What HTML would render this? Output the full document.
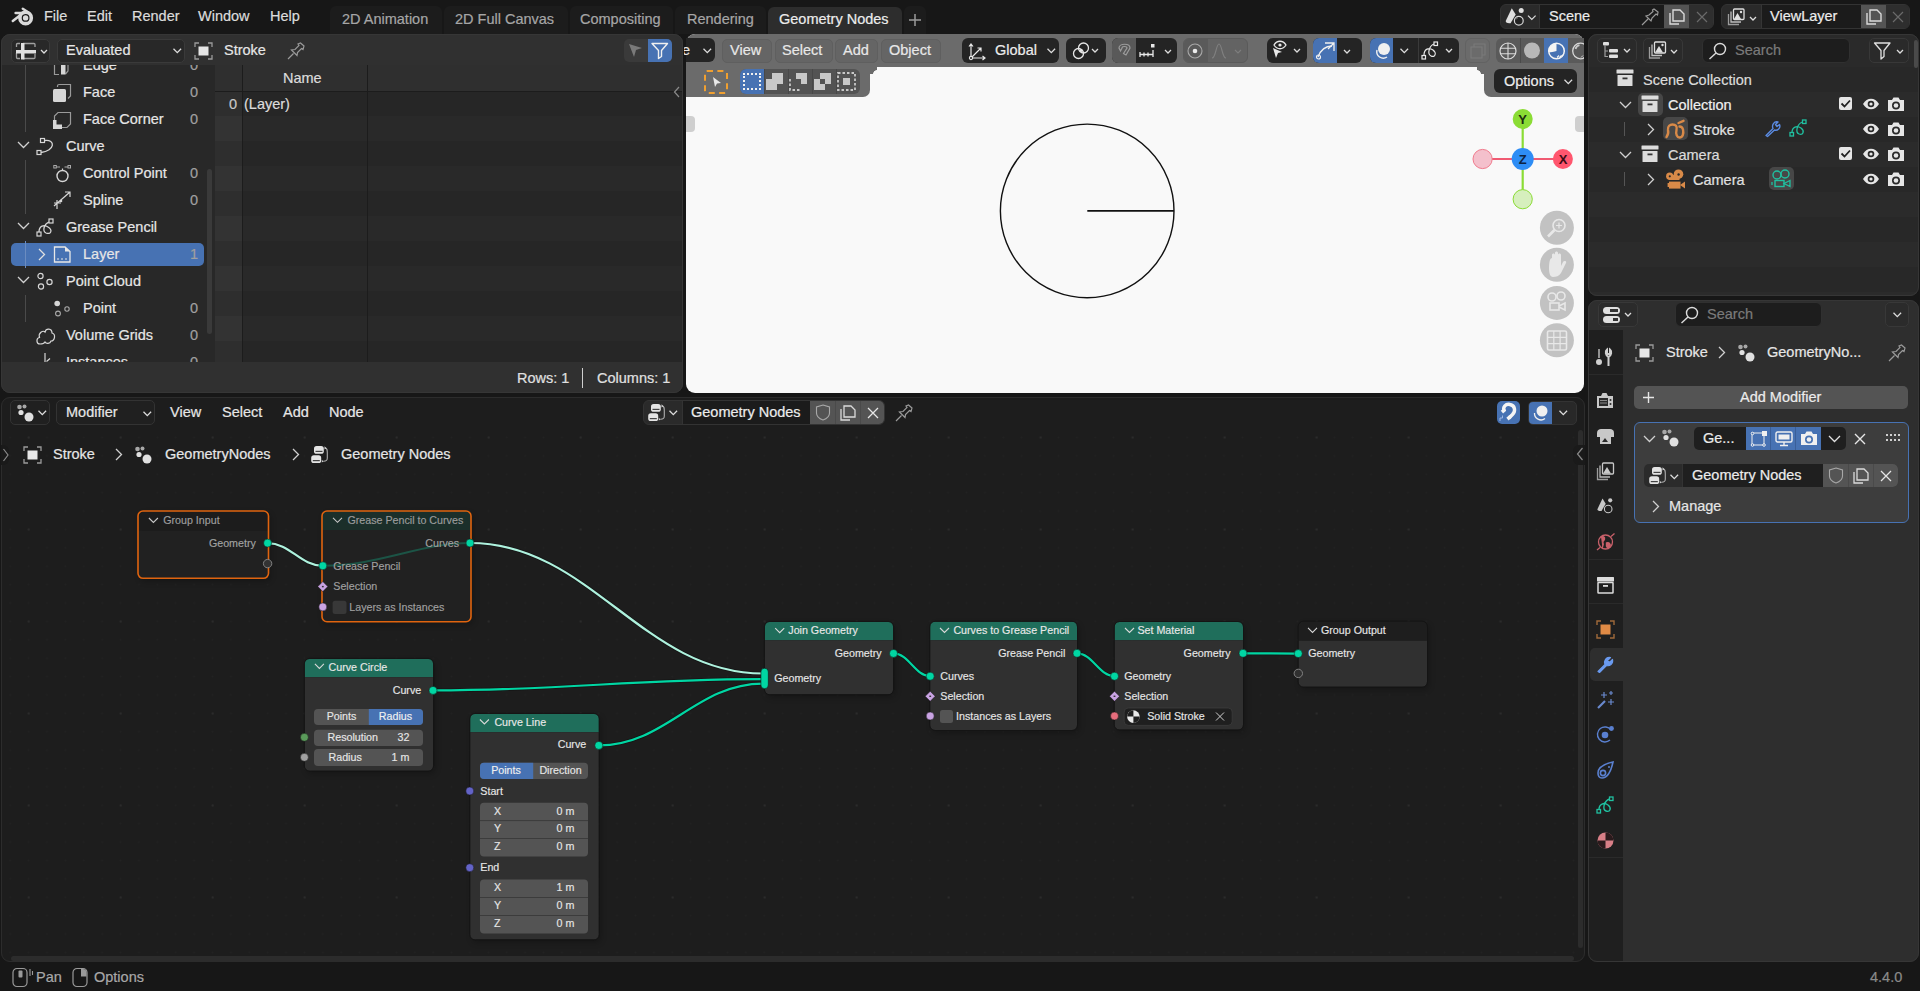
<!DOCTYPE html>
<html><head><meta charset="utf-8">
<style>
*{box-sizing:border-box;margin:0;padding:0}
html,body{width:1920px;height:991px;overflow:hidden;background:#171717;font-family:"Liberation Sans",sans-serif;color:#e5e5e5}
.a{position:absolute}
.t{position:absolute;white-space:nowrap;font-size:14.5px;line-height:18px;height:18px;-webkit-text-stroke:0.2px currentColor}
.s{position:absolute;white-space:nowrap;font-size:11px;line-height:14px;height:14px}
svg{position:absolute;overflow:visible}
.area{position:absolute;border:1px solid #3a3a3a;border-radius:9px;overflow:hidden}
.btn{position:absolute;border-radius:5px;background:#2b2b2b;border:1px solid #3d3d3d}
.dk{position:absolute;border-radius:5px;background:#1d1d1d}
</style></head><body>
<!-- TOP BAR -->
<div class="a" style="left:0;top:0;width:1920px;height:34px;background:#171717">
 <svg style="left:0;top:0" width="40" height="34"><g stroke="#dadada" stroke-linecap="round" fill="none"><path d="M15.6 12.9 H24 M12.8 21 L20.5 15 M22.8 8.8 L28.5 12.5" stroke-width="2.5"/><circle cx="25.6" cy="17.9" r="5.7" stroke-width="3.6"/></g><circle cx="25.6" cy="17.9" r="2.7" fill="#dadada"/></svg>
 <div class="t" style="left:44px;top:7px;color:#dcdcdc">File</div>
 <div class="t" style="left:87px;top:7px;color:#dcdcdc">Edit</div>
 <div class="t" style="left:132px;top:7px;color:#dcdcdc">Render</div>
 <div class="t" style="left:198px;top:7px;color:#dcdcdc">Window</div>
 <div class="t" style="left:270px;top:7px;color:#dcdcdc">Help</div>
 <div class="a" style="left:330px;top:6px;width:112px;height:28px;background:#1c1c1c;border-radius:6px 6px 0 0"></div>
 <div class="a" style="left:444px;top:6px;width:124px;height:28px;background:#1c1c1c;border-radius:6px 6px 0 0"></div>
 <div class="a" style="left:570px;top:6px;width:103px;height:28px;background:#1c1c1c;border-radius:6px 6px 0 0"></div>
 <div class="a" style="left:675px;top:6px;width:91px;height:28px;background:#1c1c1c;border-radius:6px 6px 0 0"></div>
 <div class="a" style="left:768px;top:7px;width:134px;height:27px;background:#2d2d2d;border-radius:6px 6px 0 0"></div>
 <div class="a" style="left:904px;top:6px;width:22px;height:28px;background:#1c1c1c;border-radius:6px 6px 0 0"></div>
 <div class="t" style="left:342px;top:10px;color:#a6a6a6">2D Animation</div>
 <div class="t" style="left:455px;top:10px;color:#a6a6a6">2D Full Canvas</div>
 <div class="t" style="left:580px;top:10px;color:#a6a6a6">Compositing</div>
 <div class="t" style="left:687px;top:10px;color:#a6a6a6">Rendering</div>
 <div class="t" style="left:779px;top:10px;color:#ececec">Geometry Nodes</div>
 <svg style="left:909px;top:14px" width="12" height="12"><path d="M6 0V12M0 6H12" stroke="#9a9a9a" stroke-width="1.5"/></svg>
 <!-- scene widget -->
 <div class="a" style="left:1500px;top:4px;width:214px;height:25px;border-radius:6px;background:#2a2a2a;border:1px solid #333;overflow:hidden">
  <div class="a" style="left:38px;top:0;width:125px;height:25px;background:#1b1b1b;border-left:1px solid #353535"></div>
  <div class="a" style="left:163px;top:0;width:25px;height:25px;background:#545454"></div>
  <div class="a" style="left:188px;top:0;width:26px;height:25px;background:#2e2e2e"></div>
 </div>
 <svg style="left:1500px;top:4px" width="45" height="26"><path d="M11.8 4.2 L5.8 16.8 C5.3 18.3 7 19.6 10.6 19.2 L15.7 10.6 Z" fill="#e0e0e0"/><circle cx="21.2" cy="6.6" r="2.5" fill="#e0e0e0"/><circle cx="18.8" cy="16.7" r="4.4" fill="#222" stroke="#d8d8d8" stroke-width="1.2"/><path d="M16.5 14.8 L17.5 14" stroke="#bbb" stroke-width="1"/><path d="M28 11.6 L31.8 15.4 L35.6 11.6" fill="none" stroke="#ddd" stroke-width="1.2"/></svg>
 <div class="t" style="left:1549px;top:7px;color:#ececec">Scene</div>
 <svg style="left:1641px;top:8px" width="18" height="18"><path d="M1 17 L7 11 M5 8 L10 13 L11 10 L15 6 L16.5 7 L17 4 L13 1 L11.5 2 L12 3.5 L8 7 Z" fill="none" stroke="#9a9a9a" stroke-width="1.2"/></svg>
 <svg style="left:1667px;top:8px" width="20" height="18"><path d="M3 5 V16 H12 M6 2 H13 L17 6 V13 H6 Z" fill="none" stroke="#dadada" stroke-width="1.4"/></svg>
 <svg style="left:1696px;top:11px" width="12" height="12"><path d="M1 1L11 11M11 1L1 11" stroke="#6a6a6a" stroke-width="1.2"/></svg>
 <div class="a" style="left:1721px;top:4px;width:189px;height:25px;border-radius:6px;background:#2a2a2a;border:1px solid #333;overflow:hidden">
  <div class="a" style="left:39px;top:0;width:100px;height:25px;background:#1b1b1b;border-left:1px solid #353535"></div>
  <div class="a" style="left:139px;top:0;width:25px;height:25px;background:#545454"></div>
  <div class="a" style="left:164px;top:0;width:25px;height:25px;background:#2e2e2e"></div>
 </div>
 <svg style="left:1727px;top:8px" width="32" height="18"><path d="M1.5 6 V16.5 H12" fill="none" stroke="#9c9c9c" stroke-width="1.3"/><path d="M4 3.5 V14 H14" fill="none" stroke="#c0c0c0" stroke-width="1.3"/><rect x="6.5" y="1" width="10.5" height="10.5" rx="1" fill="none" stroke="#dedede" stroke-width="1.3"/><path d="M7 11 L10.5 5 L14 11Z" fill="#dedede"/><circle cx="14" cy="4" r="1.2" fill="#dedede"/><path d="M23 9l3 3 3-3" fill="none" stroke="#ddd" stroke-width="1.3"/></svg>
 <div class="t" style="left:1770px;top:7px;color:#ececec">ViewLayer</div>
 <svg style="left:1864px;top:8px" width="20" height="18"><path d="M3 5 V16 H12 M6 2 H13 L17 6 V13 H6 Z" fill="none" stroke="#dadada" stroke-width="1.4"/></svg>
 <svg style="left:1892px;top:11px" width="12" height="12"><path d="M1 1L11 11M11 1L1 11" stroke="#6a6a6a" stroke-width="1.2"/></svg>
</div>

<!-- SPREADSHEET -->
<div class="a" style="left:1px;top:34px;width:682px;height:359px;background:#282828;border-radius:9px;overflow:hidden">
 <div class="a" style="left:0;top:0;width:682px;height:31px;background:#303030"></div>
 <div class="a" style="left:214px;top:31px;width:468px;height:297px;background:#282828"></div>
 <div class="a" style="left:214px;top:57px;width:468px;height:271px;background:repeating-linear-gradient(#262626 0 25px, #292929 25px 50px)"></div>
 <div class="a" style="left:214px;top:57px;width:27px;height:271px;background:repeating-linear-gradient(#2e2e2e 0 25px, #333333 25px 50px)"></div>
 <div class="a" style="left:214px;top:31px;width:468px;height:26px;background:#2f2f2f"></div>
 <div class="a" style="left:214px;top:57px;width:468px;height:1px;background:#1c1c1c"></div>
 <div class="a" style="left:241px;top:31px;width:1px;height:297px;background:#1c1c1c"></div>
 <div class="a" style="left:366px;top:31px;width:1px;height:297px;background:#1c1c1c"></div>
 <div class="a" style="left:0;top:328px;width:682px;height:31px;background:#303030"></div>
</div>
<div class="a" style="left:1px;top:34px;width:682px;height:359px;border:1px solid #363636;border-radius:9px"></div>
<!-- ss header -->
<div class="btn" style="left:11px;top:39px;width:39px;height:24px;background:#282828;border-color:#3a3a3a"></div>
<svg style="left:15px;top:42px" width="32" height="18"><path d="M1.5 5V2.5a1 1 0 0 1 1-1H5 M8 1.5H19a1 1 0 0 1 1 1V5 M1.5 11V15.5a1 1 0 0 0 1 1H5 M8 16.5H19a1 1 0 0 0 1-1V12" fill="none" stroke="#a0a0a0" stroke-width="1.3"/><rect x="1" y="8" width="20" height="3.5" fill="#e0e0e0"/><rect x="6" y="1" width="3.5" height="16.5" fill="#e0e0e0"/><path d="M26 8l3 3 3-3" fill="none" stroke="#ddd" stroke-width="1.3"/></svg>
<div class="btn" style="left:57px;top:39px;width:128px;height:24px;background:#282828;border-color:#3a3a3a"></div>
<div class="t" style="left:66px;top:41px;color:#e6e6e6">Evaluated</div>
<svg style="left:173px;top:48px" width="9" height="6"><path d="M0.5 0.8l3.8 3.8 3.8-3.8" fill="none" stroke="#ddd" stroke-width="1.3"/></svg>
<svg style="left:194px;top:42px" width="19" height="18"><path d="M1 5V1H5 M14 1H18V5 M18 13V17H14 M5 17H1V13" fill="none" stroke="#9a9a9a" stroke-width="1.3"/><rect x="4.5" y="4.5" width="10" height="9" fill="#e6e6e6"/></svg>
<div class="t" style="left:224px;top:41px;color:#e6e6e6">Stroke</div>
<svg style="left:287px;top:42px" width="18" height="18"><path d="M1 17 L6.5 11.5 M4.5 8 L10 13.5 L10.5 10.5 L14.5 6.5 L16 7.5 L17 4 L13.5 1 L11 2 L12 3.5 L8 7.5 Z" fill="none" stroke="#9a9a9a" stroke-width="1.2"/></svg>
<div class="a" style="left:624px;top:39px;width:48px;height:23px;border-radius:5px;background:#3a3a3a;overflow:hidden"><div class="a" style="left:24px;top:0;width:24px;height:23px;background:#4772b3"></div></div>
<svg style="left:628px;top:43px" width="15" height="15"><path d="M1 1 L14 5 L8 7 L6 14 Z" fill="#7a7a7a"/></svg>
<svg style="left:651px;top:42px" width="18" height="17"><path d="M1 1.5 H16.5 L10.5 8.5 V14.5 L7.5 16.5 V8.5 Z" fill="none" stroke="#f0f0f0" stroke-width="1.4" stroke-linejoin="round"/></svg>
<svg style="left:673px;top:86px" width="8" height="12"><path d="M6 1 L1.5 6 L6 11" fill="none" stroke="#8a8a8a" stroke-width="1.2"/></svg>
<div class="t" style="left:283px;top:69px;color:#dcdcdc">Name</div>
<div class="t" style="left:229px;top:95px;color:#c8c8c8">0</div>
<div class="t" style="left:244px;top:95px;color:#dcdcdc">(Layer)</div>
<div class="t" style="left:517px;top:369px;color:#e0e0e0">Rows: 1</div>
<div class="a" style="left:582px;top:368px;width:1px;height:20px;background:#cfcfcf"></div>
<div class="t" style="left:597px;top:369px;color:#e0e0e0">Columns: 1</div>
<!-- ss tree -->
<div class="a" style="left:1px;top:65px;width:212px;height:297px;overflow:hidden">
 <div class="a" style="left:24px;top:-20px;width:1px;height:87px;background:#4a4a4a"></div>
 <div class="a" style="left:24px;top:95px;width:1px;height:54px;background:#4a4a4a"></div>
 <div class="a" style="left:24px;top:176px;width:1px;height:27px;background:#4a4a4a"></div>
 <div class="a" style="left:24px;top:230px;width:1px;height:27px;background:#4a4a4a"></div>
 <div class="a" style="left:10px;top:178px;width:193px;height:23px;background:#4772b3;border-radius:5px"></div>
 <div class="a" style="left:24px;top:176px;width:1px;height:27px;background:#6b8cc0"></div>
 <div class="a" style="left:206px;top:104px;width:5px;height:165px;background:#3a3a3a;border-radius:3px"></div>
 <div class="t" style="left:82px;top:-9px;color:#e6e6e6">Edge</div>
 <div class="t" style="left:189px;top:-9px;color:#a0a0a0">0</div>
 <div class="t" style="left:82px;top:18px;color:#e6e6e6">Face</div>
 <div class="t" style="left:189px;top:18px;color:#a0a0a0">0</div>
 <div class="t" style="left:82px;top:45px;color:#e6e6e6">Face Corner</div>
 <div class="t" style="left:189px;top:45px;color:#a0a0a0">0</div>
 <div class="t" style="left:65px;top:72px;color:#e6e6e6">Curve</div>
 <div class="t" style="left:82px;top:99px;color:#e6e6e6">Control Point</div>
 <div class="t" style="left:189px;top:99px;color:#a0a0a0">0</div>
 <div class="t" style="left:82px;top:126px;color:#e6e6e6">Spline</div>
 <div class="t" style="left:189px;top:126px;color:#a0a0a0">0</div>
 <div class="t" style="left:65px;top:153px;color:#e6e6e6">Grease Pencil</div>
 <div class="t" style="left:82px;top:180px;color:#e6e6e6">Layer</div>
 <div class="t" style="left:189px;top:180px;color:#a0a0a0">1</div>
 <div class="t" style="left:65px;top:207px;color:#e6e6e6">Point Cloud</div>
 <div class="t" style="left:82px;top:234px;color:#e6e6e6">Point</div>
 <div class="t" style="left:189px;top:234px;color:#a0a0a0">0</div>
 <div class="t" style="left:65px;top:261px;color:#e6e6e6">Volume Grids</div>
 <div class="t" style="left:189px;top:261px;color:#a0a0a0">0</div>
 <div class="t" style="left:65px;top:288px;color:#e6e6e6">Instances</div>
 <div class="t" style="left:189px;top:288px;color:#a0a0a0">0</div>
 <svg style="left:16px;top:76px" width="14" height="8"><path d="M1 1 L6.5 6.5 L12 1" fill="none" stroke="#d0d0d0" stroke-width="1.3"/></svg>
 <svg style="left:16px;top:157px" width="14" height="8"><path d="M1 1 L6.5 6.5 L12 1" fill="none" stroke="#d0d0d0" stroke-width="1.3"/></svg>
 <svg style="left:16px;top:211px" width="14" height="8"><path d="M1 1 L6.5 6.5 L12 1" fill="none" stroke="#d0d0d0" stroke-width="1.3"/></svg>
 <svg style="left:37px;top:183px" width="8" height="14"><path d="M1 1 L6.5 6.5 L1 12" fill="none" stroke="#e0e0e0" stroke-width="1.3"/></svg>

 <svg style="left:0;top:0" width="80" height="70"><g fill="none" stroke="#9a9a9a" stroke-width="1.2">
<path d="M53.5 -2 V9.5 H58"/><path d="M67 -2 V6 L64.5 9"/>
<path d="M56.5 22 V21 Q56.5 19.5 58 19.5 H69.5 V31 L67 33.5"/>
<path d="M53.5 55 V51 L57 47.5 H69.5 V59 L66 62.5 H61"/></g>
<rect x="60" y="-3" width="4.5" height="12.5" fill="#d6d6d6"/>
<rect x="52" y="24" width="13" height="13" rx="1.5" fill="#d6d6d6"/>
<path d="M52 55 H55.5 V59.5 H61 V64 H52 Z" fill="#d6d6d6"/></svg>
 
 
 <svg style="left:35px;top:72px" width="20" height="20"><rect x="4.5" y="1.5" width="4" height="4" fill="none" stroke="#d6d6d6" stroke-width="1.2"/><rect x="1" y="13.5" width="4" height="4" fill="none" stroke="#d6d6d6" stroke-width="1.2"/><path d="M8.5 3.5 C20 2 19 14 5 15.5" fill="none" stroke="#d6d6d6" stroke-width="1.3"/></svg>
 <svg style="left:52px;top:99px" width="20" height="20"><circle cx="9.5" cy="12" r="5.5" fill="none" stroke="#d6d6d6" stroke-width="1.4"/><rect x="0.8" y="1.5" width="2.5" height="2.5" fill="none" stroke="#aaa" stroke-width="1"/><rect x="15" y="1.5" width="2.5" height="2.5" fill="none" stroke="#aaa" stroke-width="1"/><path d="M3.5 3 H7 M11.5 3 H15" stroke="#aaa" stroke-width="1"/><path d="M9.5 4.5 L9.5 6.5" stroke="#d6d6d6" stroke-width="1.2"/></svg>
 <svg style="left:52px;top:126px" width="20" height="20"><path d="M1 15 L17 1 M12 1 H17 V6 M4 9 L4 18 M1 12 L8 12" fill="none" stroke="#d6d6d6" stroke-width="1.2"/><circle cx="8" cy="10" r="1.3" fill="#d6d6d6"/></svg>
 <svg style="left:35px;top:153px" width="20" height="20"><rect x="13" y="1" width="4" height="4" fill="none" stroke="#d6d6d6" stroke-width="1.2"/><rect x="1" y="14" width="4" height="4" fill="none" stroke="#d6d6d6" stroke-width="1.2"/><path d="M3 14 C3 8 8 6 12 9 C17 12 15 17 10 15 C6 13 8 6 13 4" fill="none" stroke="#d6d6d6" stroke-width="1.3"/></svg>
 <svg style="left:52px;top:180px" width="20" height="20"><path d="M1.5 2 H12 L17 6.5 V17 H1.5 Z" fill="none" stroke="#e8e8e8" stroke-width="1.3"/><path d="M12 2 V6.5 H17" fill="#e8e8e8"/><path d="M4 14 H6 M8 14 H10 M12 14 H14" stroke="#e8e8e8" stroke-width="1.2"/></svg>
 <svg style="left:35px;top:207px" width="20" height="20"><circle cx="4.5" cy="4" r="2.6" fill="none" stroke="#d6d6d6" stroke-width="1.2"/><circle cx="5" cy="14.5" r="2.6" fill="none" stroke="#d6d6d6" stroke-width="1.2"/><circle cx="13.5" cy="10" r="2.6" fill="none" stroke="#d6d6d6" stroke-width="1.2"/></svg>
 <svg style="left:52px;top:234px" width="20" height="20"><circle cx="4.2" cy="4.5" r="2.8" fill="#d6d6d6"/><circle cx="5" cy="14.5" r="2.4" fill="none" stroke="#aaa" stroke-width="1.1"/><circle cx="14" cy="10" r="2.2" fill="none" stroke="#aaa" stroke-width="1.1"/></svg>
 <svg style="left:35px;top:261px" width="20" height="20"><path d="M4 18 C0 18 0 12 3.5 11.5 C2 7 7 4 9 6 C10 2 16 2 16 7 C20 8 19 15 15 15 C14 18 10 18 9 16 C8 18 6 18 4 18 Z" fill="none" stroke="#d6d6d6" stroke-width="1.2"/></svg>
 <svg style="left:42px;top:287px" width="16" height="14"><path d="M2 1 V12 M3.5 9.5 L7 6.5" fill="none" stroke="#d6d6d6" stroke-width="1.2"/></svg>
</div>


<!-- VIEWPORT -->
<div class="a" style="left:686px;top:34px;width:898px;height:359px;background:#f9f9f9;border-radius:9px;overflow:hidden">
 <div class="a" style="left:0;top:0;width:898px;height:33px;background:#6b6b6b"></div>
 <div class="a" style="left:0;top:32px;width:184px;height:31px;background:#6b6b6b;border-radius:0 0 7px 0"></div>
 <div class="a" style="left:798px;top:32px;width:100px;height:31px;background:#6b6b6b;border-radius:0 0 0 7px"></div>
 <div class="a" style="left:184px;top:33px;width:7px;height:7px;background:radial-gradient(circle at 100% 100%, #f9f9f9 3.5px, #6b6b6b 4.2px)"></div>
 <div class="a" style="left:791px;top:33px;width:7px;height:7px;background:radial-gradient(circle at 0% 100%, #f9f9f9 3.5px, #6b6b6b 4.2px)"></div>
 <div class="a" style="left:0;top:82px;width:9px;height:16px;background:#cfcfcf;border-radius:0 4px 4px 0"></div>
 <div class="a" style="left:889px;top:82px;width:9px;height:16px;background:#cfcfcf;border-radius:4px 0 0 4px"></div>
</div>

<!-- vp header -->
<div class="a" style="left:686px;top:38px;width:29px;height:24px;background:#242424;border-radius:0 6px 6px 0"></div>
<div class="t" style="left:684px;top:41px;color:#e6e6e6;width:8px;overflow:hidden;text-indent:-2px">e</div>
<svg style="left:703px;top:48px" width="9" height="6"><path d="M0.5 0.8l3.8 3.8 3.8-3.8" fill="none" stroke="#ddd" stroke-width="1.3"/></svg>
<div class="a" style="left:722px;top:39px;width:50px;height:24px;background:#656565;border-radius:5px;border:1px solid #5f5f5f"></div>
<div class="a" style="left:775px;top:39px;width:58px;height:24px;background:#656565;border-radius:5px;border:1px solid #5f5f5f"></div>
<div class="a" style="left:835px;top:39px;width:43px;height:24px;background:#656565;border-radius:5px;border:1px solid #5f5f5f"></div>
<div class="a" style="left:881px;top:39px;width:60px;height:24px;background:#656565;border-radius:5px;border:1px solid #5f5f5f"></div>
<div class="t" style="left:730px;top:41px;color:#e8e8e8">View</div>
<div class="t" style="left:782px;top:41px;color:#e8e8e8">Select</div>
<div class="t" style="left:843px;top:41px;color:#e8e8e8">Add</div>
<div class="t" style="left:889px;top:41px;color:#e8e8e8">Object</div>
<div class="a" style="left:962px;top:38px;width:97px;height:25px;background:#242424;border-radius:6px"></div>
<svg style="left:968px;top:42px" width="20" height="18"><path d="M3 16V2 M1 4.5 L3 2 L5 4.5 M3 16H17 M14.5 14 L17 16 L14.5 18 M3 16 L13 6 M9.5 6 H13 V9.5" fill="none" stroke="#e8e8e8" stroke-width="1.2"/><circle cx="3" cy="16" r="1.6" fill="#242424" stroke="#e8e8e8" stroke-width="1.1"/></svg>
<div class="t" style="left:995px;top:41px;color:#ececec">Global</div>
<svg style="left:1047px;top:48px" width="9" height="6"><path d="M0.5 0.8l3.8 3.8 3.8-3.8" fill="none" stroke="#ddd" stroke-width="1.3"/></svg>
<div class="a" style="left:1066px;top:38px;width:40px;height:25px;background:#242424;border-radius:6px"></div>
<svg style="left:1072px;top:41px" width="32" height="20"><circle cx="11.5" cy="7" r="5" fill="none" stroke="#e8e8e8" stroke-width="1.3"/><circle cx="6.5" cy="12.5" r="5" fill="none" stroke="#e8e8e8" stroke-width="1.3"/><circle cx="9" cy="9.5" r="1.5" fill="#e8e8e8"/><path d="M20 8l3 3 3-3" fill="none" stroke="#ddd" stroke-width="1.3"/></svg>
<div class="a" style="left:1112px;top:38px;width:65px;height:25px;background:#242424;border-radius:6px;overflow:hidden"><div class="a" style="left:0;top:0;width:24px;height:25px;background:#595959"></div></div>
<svg style="left:1116px;top:42px" width="18" height="18"><path d="M3 6 C3 1 14 1 14 6 L10 13 L7.5 11.5 L11 6 C11 4 6 4 6 6 L4.5 9 Z" fill="none" stroke="#9c9c9c" stroke-width="1.2"/></svg>
<svg style="left:1139px;top:42px" width="36" height="18"><rect x="12" y="2" width="3.5" height="3.5" fill="#e8e8e8"/><path d="M1 10 V15 M1 12.5 H14 M5 10.5 V14.5 M9 10.5 V14.5 M14 8 V15" fill="none" stroke="#e8e8e8" stroke-width="1.3"/><path d="M26 8l3 3 3-3" fill="none" stroke="#ddd" stroke-width="1.3"/></svg>
<div class="a" style="left:1183px;top:38px;width:65px;height:25px;background:#636363;border-radius:6px;overflow:hidden;border:1px solid #5a5a5a"><div class="a" style="left:0;top:0;width:24px;height:25px;background:#5a5a5a"></div></div>
<svg style="left:1186px;top:42px" width="18" height="18"><circle cx="9" cy="9" r="7" fill="none" stroke="#a8a8a8" stroke-width="1.1"/><circle cx="9" cy="9" r="2.3" fill="#ececec"/></svg>
<svg style="left:1210px;top:42px" width="36" height="18"><path d="M2 16 C6 16 6 2 9 2 C12 2 12 16 16 16" fill="none" stroke="#808080" stroke-width="1.1"/><path d="M25 8l3 3 3-3" fill="none" stroke="#7d7d7d" stroke-width="1.2"/></svg>
<div class="a" style="left:1267px;top:38px;width:40px;height:25px;background:#242424;border-radius:6px"></div>
<svg style="left:1269px;top:40px" width="36" height="22"><path d="M4 8 L13 12 L9 13 L7 18 Z" fill="#e8e8e8"/><path d="M5 5 C8 0 14 0 17 5 C14 10 8 10 5 5 Z" fill="none" stroke="#e8e8e8" stroke-width="1.3"/><circle cx="11" cy="5" r="1.6" fill="#e8e8e8"/><path d="M25 9l3 3 3-3" fill="none" stroke="#ddd" stroke-width="1.3"/></svg>
<div class="a" style="left:1313px;top:38px;width:49px;height:25px;background:#242424;border-radius:6px;overflow:hidden"><div class="a" style="left:0;top:0;width:24px;height:25px;background:#4772b3"></div></div>
<svg style="left:1315px;top:41px" width="40" height="20"><path d="M3 16 C6 8 11 5 17 5" fill="none" stroke="#f0f0f0" stroke-width="1.3"/><path d="M10 2 H19 V10 M19 2 L13 8" fill="none" stroke="#f0f0f0" stroke-width="1.3"/><circle cx="3.5" cy="16" r="2" fill="none" stroke="#f0f0f0" stroke-width="1.2"/><path d="M29 9l3 3 3-3" fill="none" stroke="#ddd" stroke-width="1.3"/></svg>
<div class="a" style="left:1370px;top:38px;width:89px;height:25px;background:#242424;border-radius:6px;overflow:hidden"><div class="a" style="left:0;top:0;width:23px;height:25px;background:#4772b3"></div><div class="a" style="left:48px;top:0;width:1px;height:25px;background:#3a3a3a"></div></div>
<svg style="left:1372px;top:41px" width="22" height="20"><circle cx="12" cy="8" r="6" fill="#f0f0f0"/><path d="M5 9 A6.5 6.5 0 0 0 15 16" fill="none" stroke="#f0f0f0" stroke-width="1.4"/></svg>
<svg style="left:1400px;top:48px" width="9" height="6"><path d="M0.5 0.8l3.8 3.8 3.8-3.8" fill="none" stroke="#ddd" stroke-width="1.3"/></svg>
<svg style="left:1421px;top:41px" width="36" height="20"><rect x="13" y="1" width="3.5" height="3.5" fill="none" stroke="#e8e8e8" stroke-width="1.2"/><rect x="1" y="14.5" width="3.5" height="3.5" fill="none" stroke="#e8e8e8" stroke-width="1.2"/><path d="M3 14 C3 8 8 6 12 9 C16 12 14 17 10 15 C6 13 8 5 13 3" fill="none" stroke="#e8e8e8" stroke-width="1.2"/><path d="M25 8l3 3 3-3" fill="none" stroke="#ddd" stroke-width="1.3"/></svg>
<div class="a" style="left:1465px;top:38px;width:25px;height:25px;background:#6b6b6b;border-radius:6px;border:1px solid #626262"></div>
<svg style="left:1469px;top:42px" width="18" height="18"><rect x="2" y="5" width="11" height="11" fill="none" stroke="#7a7a7a" stroke-width="1.1"/><path d="M5 5V2H16V13H13" fill="none" stroke="#7a7a7a" stroke-width="1.1"/></svg>
<div class="a" style="left:1496px;top:38px;width:88px;height:25px;background:#5a5a5a;border-radius:6px 0 0 6px;overflow:hidden"><div class="a" style="left:48px;top:0;width:24px;height:25px;background:#4772b3"></div><div class="a" style="left:24px;top:0;width:1px;height:25px;background:#4a4a4a"></div></div>
<svg style="left:1499px;top:41px" width="20" height="20"><circle cx="9" cy="10" r="8" fill="none" stroke="#dcdcdc" stroke-width="1.2"/><path d="M9 2 V18 M1.6 7.3 H16.4 M1.6 12.7 H16.4" stroke="#dcdcdc" stroke-width="1.1"/></svg>
<svg style="left:1523px;top:41px" width="20" height="20"><circle cx="9" cy="9.5" r="8" fill="#b8b8b8"/></svg>
<svg style="left:1547px;top:41px" width="20" height="20"><circle cx="9.5" cy="10" r="7.8" fill="#4772b3" stroke="#f4f4f4" stroke-width="1.5"/><path d="M9.5 10 V2.2 A7.8 7.8 0 0 0 1.8 11 C4 11.5 7 11 9.5 10 Z" fill="#f4f4f4"/><path d="M10 16.5 L12 14.5 M12.5 16.5 L14.5 14.5 M14.8 15.2 L16.5 13.5" stroke="#f4f4f4" stroke-width="1.1"/></svg>
<svg style="left:1571px;top:41px;overflow:hidden" width="13" height="20"><circle cx="9.5" cy="10" r="7.8" fill="none" stroke="#d8d8d8" stroke-width="1.3"/><path d="M4.5 8 A5.5 5.5 0 0 1 8.5 4.2" fill="none" stroke="#c8c8c8" stroke-width="1.8"/><path d="M10 16.5 L12 14.5 M12.5 16.5 L14.5 14.5" stroke="#d8d8d8" stroke-width="1"/></svg>
<!-- tool header -->
<div class="a" style="left:704px;top:70px;width:24px;height:24px;border:2px dashed #f0a030;border-radius:3px"></div>
<svg style="left:712px;top:76px" width="10" height="12"><path d="M1 1 L9 7 L5 7.5 L3 11 Z" fill="#e8e8e8"/></svg>
<div class="a" style="left:740px;top:69px;width:120px;height:25px;background:#535353;border-radius:6px;overflow:hidden"><div class="a" style="left:0;top:0;width:24px;height:25px;background:#4772b3"></div>
 <div class="a" style="left:24px;top:0;width:1px;height:25px;background:#484848"></div><div class="a" style="left:48px;top:0;width:1px;height:25px;background:#484848"></div><div class="a" style="left:72px;top:0;width:1px;height:25px;background:#484848"></div><div class="a" style="left:96px;top:0;width:1px;height:25px;background:#484848"></div></div>
<div class="a" style="left:743px;top:73px;width:18px;height:17px;border:2px dotted #f0f0f0"></div>
<svg style="left:765px;top:72px" width="20" height="20"><path d="M7 1 H18 V12 H12 V18 H1 V7 H7 Z" fill="#c8c8c8"/></svg>
<svg style="left:789px;top:72px" width="20" height="20"><path d="M1 7 V18 H12" fill="none" stroke="#c8c8c8" stroke-width="1.8" stroke-dasharray="2.5 2"/><path d="M7 1 H18 V12 H12 V7 H7 Z" fill="#c8c8c8"/></svg>
<svg style="left:813px;top:72px" width="20" height="20"><path d="M7 1 H18 V12 H12 V18 H1 V7 H7 Z M7 7 V12 H12 V7 Z" fill="#c8c8c8" fill-rule="evenodd"/></svg>
<svg style="left:837px;top:72px" width="20" height="20"><rect x="1" y="1" width="17" height="17" fill="none" stroke="#c8c8c8" stroke-width="1.8" stroke-dasharray="2.5 2"/><rect x="6" y="6" width="7" height="7" fill="#c8c8c8"/></svg>
<div class="a" style="left:1494px;top:69px;width:83px;height:24px;background:#242424;border-radius:6px"></div>
<div class="t" style="left:1504px;top:72px;color:#ececec">Options</div>
<svg style="left:1564px;top:79px" width="9" height="6"><path d="M0.5 0.8l3.8 3.8 3.8-3.8" fill="none" stroke="#ddd" stroke-width="1.3"/></svg>
<!-- circle drawing -->
<svg style="left:0;top:0" width="1920" height="991"><circle cx="1087.2" cy="210.9" r="86.8" fill="none" stroke="#111" stroke-width="1.4"/><path d="M1087.3 210.9 H1174" stroke="#111" stroke-width="1.9"/></svg>
<!-- nav gizmo -->
<svg style="left:0;top:0" width="1920" height="991">
 <path d="M1522.7 119 V199" stroke="#8bdc35" stroke-width="2.2"/>
 <path d="M1482.6 159 H1563" stroke="#f05a72" stroke-width="2.2"/>
 <circle cx="1482.6" cy="159" r="9.6" fill="#f4c0cc" stroke="#f07a8c" stroke-width="1"/>
 <circle cx="1522.7" cy="199.2" r="9.6" fill="#d6efbd" stroke="#8bdc35" stroke-width="1"/>
 <circle cx="1522.7" cy="119" r="10" fill="#8bdc35"/>
 <circle cx="1562.9" cy="159" r="10" fill="#ff566e"/>
 <circle cx="1522.7" cy="159" r="11" fill="#2e8df5"/>
 <text x="1522.7" y="124" font-family="Liberation Sans" font-weight="bold" font-size="13" fill="#1c2a10" text-anchor="middle">Y</text>
 <text x="1563" y="164" font-family="Liberation Sans" font-weight="bold" font-size="13" fill="#3a0c14" text-anchor="middle">X</text>
 <text x="1522.7" y="164" font-family="Liberation Sans" font-weight="bold" font-size="13" fill="#0d2240" text-anchor="middle">Z</text>
 <circle cx="1556.9" cy="227.8" r="17" fill="#c2c2c2"/>
 <circle cx="1556.9" cy="264.8" r="17" fill="#c2c2c2"/>
 <circle cx="1556.9" cy="302.9" r="17" fill="#c2c2c2"/>
 <circle cx="1556.9" cy="340.2" r="17" fill="#c2c2c2"/>
 <g fill="none" stroke="#e8e8e8" stroke-width="1.6">
  <circle cx="1559" cy="225.5" r="6"/><path d="M1554.5 230 L1548 236.5" stroke-width="2.6"/><path d="M1559 222.5 V228.5 M1556 225.5 H1562" stroke-width="1.2"/>
  <rect x="1547.5" y="331" width="19" height="19" rx="1.5"/><path d="M1547.5 337.3 H1566.5 M1547.5 343.6 H1566.5 M1553.8 331 V350 M1560.1 331 V350" stroke-width="1.2"/>
  <circle cx="1552" cy="297" r="4"/><circle cx="1561" cy="296" r="4"/><rect x="1550" y="303" width="9" height="7"/><path d="M1559 306 L1565 303 V310 L1559 307" />
 </g>
 <path d="M1549 268 C1549 262 1550 258 1552 258 V265 V255 C1552 253 1555 253 1555 255 V264 V253 C1555 251 1558 251 1558 253 V264 V255 C1558 253 1561 253 1561 255 V266 L1563 262 C1564 260 1567 261 1566 263 L1561 273 C1559 276 1556 277 1553 277 C1550 277 1549 273 1549 268Z" fill="#e8e8e8"/>
</svg>


<!-- OUTLINER -->
<div class="a" style="left:1588px;top:34px;width:331px;height:262px;background:#282828;border-radius:9px;overflow:hidden">
 <div class="a" style="left:0;top:58px;width:331px;height:25px;background:#2b2b2b"></div><div class="a" style="left:0;top:108px;width:331px;height:25px;background:#2b2b2b"></div><div class="a" style="left:0;top:158px;width:331px;height:25px;background:#2b2b2b"></div><div class="a" style="left:0;top:208px;width:331px;height:25px;background:#2b2b2b"></div><div class="a" style="left:0;top:258px;width:331px;height:25px;background:#2b2b2b"></div>
 <div class="a" style="left:0;top:0;width:331px;height:33px;background:#2a2a2a"></div>
 <div class="a" style="left:326px;top:6px;width:4px;height:28px;background:#4a4a4a;border-radius:2px"></div>
</div>
<div class="a" style="left:1588px;top:34px;width:331px;height:262px;border:1px solid #363636;border-radius:9px"></div>
<div class="btn" style="left:1597px;top:38px;width:40px;height:25px;background:#2a2a2a;border-color:#383838"></div>
<svg style="left:1602px;top:41px" width="32" height="20"><rect x="1" y="1" width="6" height="3.5" rx="1" fill="#e0e0e0"/><path d="M3 4.5 V15.5 H6 M3 10 H6" fill="none" stroke="#a0a0a0" stroke-width="1.2"/><rect x="7" y="8" width="9" height="3.5" rx="1" fill="#e0e0e0"/><rect x="7" y="13.5" width="9" height="3.5" rx="1" fill="#e0e0e0"/><path d="M22 8l3 3 3-3" fill="none" stroke="#ddd" stroke-width="1.3"/></svg>
<div class="btn" style="left:1643px;top:38px;width:40px;height:25px;background:#2a2a2a;border-color:#383838"></div>
<svg style="left:1648px;top:41px" width="32" height="20"><path d="M1.5 6 V17 H12" fill="none" stroke="#9c9c9c" stroke-width="1.3"/><path d="M4 3.5 V14.5 H14" fill="none" stroke="#c0c0c0" stroke-width="1.3"/><rect x="6.5" y="1" width="11" height="11" rx="1" fill="none" stroke="#dedede" stroke-width="1.3"/><path d="M7 11.5 L11 5 L15 11.5Z" fill="#dedede"/><circle cx="14.5" cy="4" r="1.2" fill="#dedede"/><path d="M23 9l3 3 3-3" fill="none" stroke="#ddd" stroke-width="1.3"/></svg>
<div class="a" style="left:1702px;top:38px;width:148px;height:25px;background:#1d1d1d;border-radius:6px;border:1px solid #303030"></div>
<svg style="left:1708px;top:42px" width="20" height="18"><circle cx="12" cy="7" r="5.5" fill="none" stroke="#dcdcdc" stroke-width="1.4"/><path d="M8 11 L1.5 17" stroke="#dcdcdc" stroke-width="1.4"/></svg>
<div class="t" style="left:1735px;top:41px;color:#7a7a7a">Search</div>
<div class="btn" style="left:1869px;top:38px;width:40px;height:25px;background:#2a2a2a;border-color:#383838"></div>
<svg style="left:1873px;top:41px" width="34" height="20"><path d="M1.5 2 H17 L11 9.5 V15.5 L8 18 V9.5 Z" fill="none" stroke="#e0e0e0" stroke-width="1.3" stroke-linejoin="round"/><path d="M24 9l3 3 3-3" fill="none" stroke="#ddd" stroke-width="1.3"/></svg>
<svg style="left:1616px;top:69px" width="18" height="18"><rect x="0.5" y="0.5" width="17" height="4" rx="0.5" fill="#dcdcdc"/><rect x="1.5" y="6" width="15" height="11" rx="0.5" fill="#dcdcdc"/><rect x="6.5" y="8.5" width="5" height="1.8" fill="#333"/></svg>
<div class="t" style="left:1643px;top:71px;color:#dcdcdc">Scene Collection</div>
<svg style="left:1619px;top:101px" width="13" height="8"><path d="M1 1 L6.5 6.5 L12 1" fill="none" stroke="#d0d0d0" stroke-width="1.3"/></svg>
<div class="a" style="left:1638px;top:93px;width:25px;height:23px;background:#474747;border-radius:5px"></div>
<svg style="left:1641px;top:95px" width="18" height="18"><rect x="0.5" y="0.5" width="17" height="4" rx="0.5" fill="#dcdcdc"/><rect x="1.5" y="6" width="15" height="11" rx="0.5" fill="#dcdcdc"/><rect x="6.5" y="8.5" width="5" height="1.8" fill="#333"/></svg>
<div class="t" style="left:1668px;top:96px;color:#f0f0f0">Collection</div>
<div class="a" style="left:1839px;top:97px;width:13px;height:13px;background:#e6e6e6;border-radius:2px"></div><svg style="left:1840px;top:98px" width="11" height="11"><path d="M1.5 5.5 L4.5 8.5 L10 2.5" fill="none" stroke="#222" stroke-width="1.8"/></svg><svg style="left:1862px;top:97px" width="18" height="14"><path d="M1 7 C5 0 13 0 17 7 C13 14 5 14 1 7 Z" fill="#e6e6e6"/><circle cx="9" cy="7" r="3.3" fill="#282828"/><circle cx="9" cy="7" r="1.6" fill="#e6e6e6"/></svg><svg style="left:1887px;top:96px" width="18" height="16"><path d="M1 4 H5 L6.5 1.5 H11.5 L13 4 H17 V15 H1 Z" fill="#e6e6e6"/><circle cx="9" cy="9.5" r="4" fill="#2a2a2a"/><circle cx="9" cy="9.5" r="2.3" fill="#e6e6e6"/></svg>
<div class="a" style="left:1624px;top:122px;width:1px;height:14px;background:#555"></div>
<svg style="left:1647px;top:123px" width="8" height="13"><path d="M1 1 L6.5 6.5 L1 12" fill="none" stroke="#d0d0d0" stroke-width="1.3"/></svg>
<div class="a" style="left:1663px;top:117px;width:25px;height:23px;background:#474747;border-radius:5px"></div>
<svg style="left:1660px;top:114px" width="30" height="30"><path d="M6.5 23 C8 21 8.5 18 8 16 C7.5 12 10 10.5 12.5 10.5 C15.5 10.5 17.5 12 16.5 16 C15.5 20 17 23.5 19.5 23.5 C22.5 23.5 24 20 23 15.5 C22.5 13.5 21 12.5 19.5 12.5 M18.5 9 L23.5 6.8" fill="none" stroke="#d98a48" stroke-width="2.4" stroke-linecap="round"/></svg>
<div class="t" style="left:1693px;top:121px;color:#e0e0e0">Stroke</div>
<svg style="left:1764px;top:120px" width="19" height="17"><path d="M2 15.5 L9 8.5 C7.5 5 10 1 14 2 L11.5 4.5 L13 6.5 L15.5 4.5 C17 8 13.5 11 10.5 10 L3.5 16.5 Z" fill="none" stroke="#5a8ae0" stroke-width="1.4" stroke-linejoin="round"/></svg>
<svg style="left:1789px;top:119px" width="19" height="18"><rect x="13.5" y="1" width="3.5" height="3.5" fill="none" stroke="#20c0a0" stroke-width="1.3"/><rect x="1" y="13.5" width="3.5" height="3.5" fill="none" stroke="#20c0a0" stroke-width="1.3"/><path d="M3 13.5 C3 8 8 6 12 9 C16 12 14 16.5 10 15 C6 13.5 8 5 13.5 3" fill="none" stroke="#20c0a0" stroke-width="1.3"/></svg>
<svg style="left:1862px;top:122px" width="18" height="14"><path d="M1 7 C5 0 13 0 17 7 C13 14 5 14 1 7 Z" fill="#e6e6e6"/><circle cx="9" cy="7" r="3.3" fill="#282828"/><circle cx="9" cy="7" r="1.6" fill="#e6e6e6"/></svg><svg style="left:1887px;top:121px" width="18" height="16"><path d="M1 4 H5 L6.5 1.5 H11.5 L13 4 H17 V15 H1 Z" fill="#e6e6e6"/><circle cx="9" cy="9.5" r="4" fill="#2a2a2a"/><circle cx="9" cy="9.5" r="2.3" fill="#e6e6e6"/></svg>
<svg style="left:1619px;top:151px" width="13" height="8"><path d="M1 1 L6.5 6.5 L12 1" fill="none" stroke="#d0d0d0" stroke-width="1.3"/></svg>
<svg style="left:1641px;top:145px" width="18" height="18"><rect x="0.5" y="0.5" width="17" height="4" rx="0.5" fill="#dcdcdc"/><rect x="1.5" y="6" width="15" height="11" rx="0.5" fill="#dcdcdc"/><rect x="6.5" y="8.5" width="5" height="1.8" fill="#333"/></svg>
<div class="t" style="left:1668px;top:146px;color:#dcdcdc">Camera</div>
<div class="a" style="left:1839px;top:147px;width:13px;height:13px;background:#e6e6e6;border-radius:2px"></div><svg style="left:1840px;top:148px" width="11" height="11"><path d="M1.5 5.5 L4.5 8.5 L10 2.5" fill="none" stroke="#222" stroke-width="1.8"/></svg><svg style="left:1862px;top:147px" width="18" height="14"><path d="M1 7 C5 0 13 0 17 7 C13 14 5 14 1 7 Z" fill="#e6e6e6"/><circle cx="9" cy="7" r="3.3" fill="#282828"/><circle cx="9" cy="7" r="1.6" fill="#e6e6e6"/></svg><svg style="left:1887px;top:146px" width="18" height="16"><path d="M1 4 H5 L6.5 1.5 H11.5 L13 4 H17 V15 H1 Z" fill="#e6e6e6"/><circle cx="9" cy="9.5" r="4" fill="#2a2a2a"/><circle cx="9" cy="9.5" r="2.3" fill="#e6e6e6"/></svg>
<div class="a" style="left:1624px;top:172px;width:1px;height:14px;background:#555"></div>
<svg style="left:1647px;top:173px" width="8" height="13"><path d="M1 1 L6.5 6.5 L1 12" fill="none" stroke="#d0d0d0" stroke-width="1.3"/></svg>
<svg style="left:1660px;top:164px" width="30" height="30"><circle cx="9.7" cy="12.2" r="3.6" fill="#d98a48"/><circle cx="18.5" cy="10.2" r="4.8" fill="#d98a48"/><rect x="8.5" y="11" width="11" height="5" fill="#d98a48"/><rect x="9" y="17.6" width="11.5" height="7" fill="#d98a48"/><rect x="7.6" y="19" width="2" height="4" fill="#d98a48"/><path d="M20 21 L25 17.6 V24.6 Z" fill="#d98a48"/><circle cx="9.8" cy="12.3" r="1.1" fill="#2a2a2a"/><circle cx="18.6" cy="10.5" r="1.2" fill="#2a2a2a"/></svg>
<div class="t" style="left:1693px;top:171px;color:#e0e0e0">Camera</div>
<div class="a" style="left:1769px;top:167px;width:25px;height:23px;background:#474747;border-radius:5px"></div>
<svg style="left:1771px;top:169px" width="21" height="20"><circle cx="6" cy="6" r="4" fill="none" stroke="#20c0a0" stroke-width="1.4"/><circle cx="14" cy="5" r="4" fill="none" stroke="#20c0a0" stroke-width="1.4"/><rect x="4" y="11.5" width="9" height="6" fill="none" stroke="#20c0a0" stroke-width="1.4"/><path d="M13 14.5 L19 11.5 V17.5 Z M1 13 V16" fill="none" stroke="#20c0a0" stroke-width="1.3"/></svg>
<svg style="left:1862px;top:172px" width="18" height="14"><path d="M1 7 C5 0 13 0 17 7 C13 14 5 14 1 7 Z" fill="#e6e6e6"/><circle cx="9" cy="7" r="3.3" fill="#282828"/><circle cx="9" cy="7" r="1.6" fill="#e6e6e6"/></svg><svg style="left:1887px;top:171px" width="18" height="16"><path d="M1 4 H5 L6.5 1.5 H11.5 L13 4 H17 V15 H1 Z" fill="#e6e6e6"/><circle cx="9" cy="9.5" r="4" fill="#2a2a2a"/><circle cx="9" cy="9.5" r="2.3" fill="#e6e6e6"/></svg>

<!-- PROPERTIES -->
<div class="a" style="left:1588px;top:300px;width:331px;height:662px;background:#2e2e2e;border-radius:9px;overflow:hidden">
 <div class="a" style="left:0;top:30px;width:35px;height:632px;background:#1f1f1f"></div>
 <div class="a" style="left:0;top:30px;width:35px;height:45px;background:#1f1f1f;border-bottom:1px solid #2a2a2a"></div>
 <div class="a" style="left:0;top:303px;width:35px;height:1px;background:#2a2a2a"></div>
 <div class="a" style="left:0;top:259px;width:35px;height:1px;background:#2a2a2a"></div>
 <div class="a" style="left:2px;top:348px;width:33px;height:33px;background:#2e2e2e;border-radius:5px 0 0 5px"></div>
 <div class="a" style="left:0;top:557px;width:35px;height:1px;background:#2a2a2a"></div>
</div>
<div class="a" style="left:1588px;top:300px;width:331px;height:662px;border:1px solid #363636;border-radius:9px"></div>
<div class="btn" style="left:1598px;top:302px;width:40px;height:25px;background:#2b2b2b;border-color:#383838"></div>
<svg style="left:1602px;top:306px" width="32" height="18"><rect x="1" y="1" width="17" height="7" rx="3.5" fill="#e0e0e0"/><rect x="1" y="10" width="17" height="7" rx="3.5" fill="#e0e0e0"/><rect x="8" y="3" width="8" height="3" fill="#333"/><rect x="11" y="12" width="5" height="3" fill="#333"/><path d="M23 7l3 3 3-3" fill="none" stroke="#ddd" stroke-width="1.3"/></svg>
<div class="a" style="left:1675px;top:302px;width:147px;height:25px;background:#1d1d1d;border-radius:6px;border:1px solid #303030"></div>
<svg style="left:1680px;top:306px" width="20" height="18"><circle cx="12" cy="7" r="5.5" fill="none" stroke="#dcdcdc" stroke-width="1.4"/><path d="M8 11 L1.5 17" stroke="#dcdcdc" stroke-width="1.4"/></svg>
<div class="t" style="left:1707px;top:305px;color:#7a7a7a">Search</div>
<div class="btn" style="left:1885px;top:302px;width:24px;height:25px;background:#2b2b2b;border-color:#383838"></div>
<svg style="left:1893px;top:312px" width="9" height="6"><path d="M0.5 0.8l3.8 3.8 3.8-3.8" fill="none" stroke="#ddd" stroke-width="1.3"/></svg>
<!-- tabs -->
<svg style="left:1596px;top:348px" width="20" height="20"><path d="M3 1 V10" stroke="#d0d0d0" stroke-width="1.3"/><circle cx="3" cy="14" r="3" fill="#d0d0d0"/><path d="M12.5 18 V9 C9.5 8 9 3 11 1.5 V6 H14 V1.5 C16 3 15.5 8 12.5 9" fill="none" stroke="#d0d0d0" stroke-width="2"/></svg>
<svg style="left:1596px;top:392px" width="19" height="17"><path d="M1 4 H5 L6.5 1 H10.5 L12 4 H17 V16 H1 Z" fill="#c8c8c8"/><rect x="3" y="6" width="9" height="8" fill="#2a2a2a"/><path d="M4 8.5 H11 M4 11 H11" stroke="#888" stroke-width="1"/><circle cx="14.5" cy="8" r="1" fill="#2a2a2a"/><circle cx="14.5" cy="12" r="1" fill="#2a2a2a"/></svg>
<svg style="left:1596px;top:427px" width="19" height="18"><path d="M1 6 C1 3 3 2 5 2 H14 C16 2 18 3 18 6 V10 H1 Z" fill="#c8c8c8"/><rect x="4" y="9" width="11" height="8" fill="#c8c8c8"/><path d="M6 15 L9 11 L12 15 Z" fill="#2a2a2a"/></svg>
<svg style="left:1596px;top:462px" width="19" height="19"><path d="M1.5 6 V17.5 H12" fill="none" stroke="#9c9c9c" stroke-width="1.3"/><path d="M4 3.5 V15 H14" fill="none" stroke="#b8b8b8" stroke-width="1.3"/><rect x="6.5" y="1" width="11" height="11" rx="1" fill="none" stroke="#c8c8c8" stroke-width="1.3"/><path d="M7 11.5 L11 5 L15 11.5Z" fill="#c8c8c8"/></svg>
<svg style="left:1594px;top:496px" width="22" height="22"><path d="M8.5 2.5 L3.5 13 C3 14.3 4.4 15.3 7.5 15 L11.7 7.8 Z" fill="#c8c8c8"/><circle cx="16.2" cy="4.3" r="2.1" fill="#c8c8c8"/><circle cx="14.2" cy="13" r="3.8" fill="#1f1f1f" stroke="#c8c8c8" stroke-width="1.1"/></svg>
<svg style="left:1596px;top:532px" width="20" height="20"><circle cx="9.5" cy="10" r="7" fill="none" stroke="#c8606a" stroke-width="1.3"/><path d="M5 5 C7 4 9 5 8.5 7 C8 9 6 9 7 11 C8 13 6 14 6.5 16 M10.5 11 C13 10 15 12 14 14.5 C13 16 11 16 10.5 14 Z" fill="#c8606a" stroke="#c8606a" stroke-width="1.4"/><path d="M1 18 L4 15.5 M15 4.5 L18.5 1.5" stroke="#c8606a" stroke-width="1.3"/></svg>
<svg style="left:1596px;top:576px" width="19" height="18"><rect x="1" y="1" width="17" height="4.5" rx="0.5" fill="#dcdcdc"/><rect x="2" y="6.5" width="15" height="10.5" rx="0.5" fill="none" stroke="#dcdcdc" stroke-width="1.5"/><rect x="7" y="9" width="5" height="1.8" fill="#dcdcdc"/></svg>
<svg style="left:1596px;top:620px" width="19" height="19"><path d="M1 5V1H5 M14 1H18V5 M18 14V18H14 M5 18H1V14" fill="none" stroke="#a06a3a" stroke-width="1.4"/><rect x="4.5" y="4.5" width="10" height="10" fill="#e08a45"/></svg>
<svg style="left:1596px;top:655px" width="19" height="19"><path d="M2 16.5 L9 9.5 C7.5 6 10 1.5 14.5 2.5 L11.5 5.5 L13.5 7.5 L16.5 4.5 C17.5 9 13.5 11.5 10.5 10.5 L3.5 17.5 Z" fill="#6a9aef" stroke="#6a9aef" stroke-width="1.2" stroke-linejoin="round"/></svg>
<svg style="left:1596px;top:691px" width="19" height="19"><path d="M2 17 L9 10" stroke="#6a8acf" stroke-width="2.2"/><path d="M5 4 H11 M8 1 V7 M12 11 H18 M15 8 V14 M13 2 H17 M15 0 V4" stroke="#6a8acf" stroke-width="1.2"/></svg>
<svg style="left:1596px;top:725px" width="19" height="19"><path d="M14 15 A7.5 7.5 0 1 1 15 5" fill="none" stroke="#5a80d0" stroke-width="1.4"/><circle cx="9" cy="10" r="3.3" fill="#5a80d0"/><circle cx="15.5" cy="3.5" r="2.4" fill="#5a80d0"/></svg>
<svg style="left:1596px;top:761px" width="19" height="19"><path d="M2 12 C2 6 8 3 17 1 C15 10 12 17 6 17 C3 17 2 15 2 12 Z" fill="none" stroke="#5a80d0" stroke-width="1.6"/><circle cx="7" cy="12" r="2.6" fill="none" stroke="#5a80d0" stroke-width="1.6"/><circle cx="13" cy="6" r="1" fill="#5a80d0"/></svg>
<svg style="left:1596px;top:796px" width="19" height="19"><rect x="13.5" y="1" width="3.5" height="3.5" fill="none" stroke="#20c0a0" stroke-width="1.3"/><rect x="1" y="13.5" width="3.5" height="3.5" fill="none" stroke="#20c0a0" stroke-width="1.3"/><path d="M3 13.5 C3 8 8 6 12 9 C16 12 14 16.5 10 15 C6 13.5 8 5 13.5 3" fill="none" stroke="#20c0a0" stroke-width="1.4"/></svg>
<svg style="left:1596px;top:831px" width="19" height="19"><circle cx="9.5" cy="9.5" r="8" fill="#d87f87"/><path d="M9.5 1.5 A8 8 0 0 1 17.5 9.5 H9.5 Z M9.5 9.5 V17.5 A8 8 0 0 1 1.5 9.5 Z" fill="#2a1a1c"/></svg>
<!-- breadcrumb -->
<svg style="left:1635px;top:344px" width="19" height="18"><path d="M1 5V1H5 M14 1H18V5 M18 13V17H14 M5 17H1V13" fill="none" stroke="#9a9a9a" stroke-width="1.3"/><rect x="4.5" y="4.5" width="10" height="9" fill="#e6e6e6"/></svg>
<div class="t" style="left:1666px;top:343px;color:#e6e6e6">Stroke</div>
<svg style="left:1718px;top:346px" width="8" height="13"><path d="M1 1 L6.5 6.5 L1 12" fill="none" stroke="#d0d0d0" stroke-width="1.3"/></svg>
<svg style="left:1737px;top:344px" width="19" height="18"><circle cx="3.5" cy="3" r="2.3" fill="#a8a8a8"/><circle cx="8.5" cy="2.5" r="2" fill="#a8a8a8"/><circle cx="5" cy="8.5" r="2.6" fill="#e0e0e0"/><circle cx="13" cy="13" r="4.5" fill="#e0e0e0"/></svg>
<div class="t" style="left:1767px;top:343px;color:#e6e6e6">GeometryNo...</div>
<svg style="left:1888px;top:344px" width="18" height="18"><path d="M1 17 L6.5 11.5 M4.5 8 L10 13.5 L10.5 10.5 L14.5 6.5 L16 7.5 L17 4 L13.5 1 L11 2 L12 3.5 L8 7.5 Z" fill="none" stroke="#9a9a9a" stroke-width="1.2"/></svg>
<div class="a" style="left:1634px;top:386px;width:274px;height:23px;background:#545454;border-radius:5px"></div>
<svg style="left:1642px;top:391px" width="13" height="13"><path d="M6.5 1 V12 M1 6.5 H12" stroke="#e6e6e6" stroke-width="1.4"/></svg>
<div class="t" style="left:1740px;top:388px;color:#ececec">Add Modifier</div>
<!-- modifier panel -->
<div class="a" style="left:1634px;top:422px;width:275px;height:101px;background:#3d3d3d;border:1.5px solid #4772b3;border-radius:6px"></div>
<svg style="left:1643px;top:435px" width="13" height="8"><path d="M1 1 L6.5 6.5 L12 1" fill="none" stroke="#d0d0d0" stroke-width="1.3"/></svg>
<svg style="left:1661px;top:429px" width="19" height="18"><circle cx="3.5" cy="3" r="2.3" fill="#a8a8a8"/><circle cx="8.5" cy="2.5" r="2" fill="#a8a8a8"/><circle cx="5" cy="8.5" r="2.6" fill="#e0e0e0"/><circle cx="13" cy="13" r="4.5" fill="#e0e0e0"/></svg>
<div class="a" style="left:1694px;top:427px;width:152px;height:23px;background:#1f1f1f;border-radius:5px;overflow:hidden"><div class="a" style="left:52px;top:0;width:75px;height:23px;background:#4772b3"></div><div class="a" style="left:76px;top:0;width:1px;height:23px;background:#3a5f99"></div><div class="a" style="left:101px;top:0;width:1px;height:23px;background:#3a5f99"></div></div>
<div class="t" style="left:1703px;top:429px;color:#ececec">Ge...</div>
<svg style="left:1751px;top:430px" width="17" height="17"><rect x="1" y="3" width="12" height="12" fill="none" stroke="#f0f0f0" stroke-width="1"/><rect x="11" y="1" width="5" height="5" fill="#f0f0f0"/><circle cx="1.5" cy="3.5" r="1.3" fill="#4772b3" stroke="#f0f0f0"/><circle cx="1.5" cy="15" r="1.3" fill="#4772b3" stroke="#f0f0f0"/><circle cx="13" cy="15" r="1.3" fill="#4772b3" stroke="#f0f0f0"/></svg>
<svg style="left:1775px;top:431px" width="18" height="16"><rect x="1" y="1" width="16" height="10" rx="1.5" fill="none" stroke="#f0f0f0" stroke-width="1.4"/><rect x="3.5" y="3.5" width="11" height="5" fill="#f0f0f0"/><path d="M9 11 V14 M5 14.5 H13" stroke="#f0f0f0" stroke-width="1.4"/></svg>
<svg style="left:1800px;top:430px" width="18" height="16"><path d="M1 4 H5 L6.5 1.5 H11.5 L13 4 H17 V15 H1 Z" fill="#f0f0f0"/><circle cx="9" cy="9.5" r="4" fill="#4772b3"/><circle cx="9" cy="9.5" r="2.3" fill="#f0f0f0"/></svg>
<svg style="left:1828px;top:435px" width="13" height="8"><path d="M1 1 L6.5 6.5 L12 1" fill="none" stroke="#e0e0e0" stroke-width="1.3"/></svg>
<svg style="left:1854px;top:433px" width="12" height="12"><path d="M1 1L11 11M11 1L1 11" stroke="#e6e6e6" stroke-width="1.4"/></svg>
<svg style="left:1886px;top:434px" width="14" height="8"><g fill="#cfcfcf"><rect x="0" y="0" width="2" height="2"/><rect x="4" y="0" width="2" height="2"/><rect x="8" y="0" width="2" height="2"/><rect x="12" y="0" width="2" height="2"/><rect x="0" y="5" width="2" height="2"/><rect x="4" y="5" width="2" height="2"/><rect x="8" y="5" width="2" height="2"/><rect x="12" y="5" width="2" height="2"/></g></svg>
<div class="a" style="left:1644px;top:464px;width:254px;height:23px;background:#2b2b2b;border-radius:5px;overflow:hidden"><div class="a" style="left:38px;top:0;width:141px;height:23px;background:#1f1f1f;border-left:1px solid #333"></div><div class="a" style="left:179px;top:0;width:75px;height:23px;background:#545454"></div><div class="a" style="left:204px;top:0;width:1px;height:23px;background:#4a4a4a"></div><div class="a" style="left:229px;top:0;width:1px;height:23px;background:#4a4a4a"></div></div>
<svg style="left:1649px;top:466px" width="20" height="20"><rect x="3" y="1" width="9.8" height="7.8" rx="2.6" fill="#e4e4e4"/><rect x="0.2" y="10.3" width="10" height="7.7" rx="2.6" fill="#e4e4e4"/><rect x="4.5" y="5.8" width="7" height="1.2" fill="#444"/><rect x="1.8" y="15" width="7" height="1.2" fill="#444"/><path d="M14 2.8 C16.3 3.2 16.3 5 16.3 8 V13 C16.3 15.5 15.5 16.2 12.5 16.2" fill="none" stroke="#b0b0b0" stroke-width="1.1"/><path d="M13.5 1.2 L15.5 3.2 L13.5 4.5 Z M10.8 15 L12.8 16.2 L10.8 17.6 Z" fill="#d0d0d0"/></svg><svg style="left:1670px;top:474px" width="9" height="6"><path d="M0.5 0.8l3.8 3.8 3.8-3.8" fill="none" stroke="#ddd" stroke-width="1.3"/></svg>
<div class="t" style="left:1692px;top:466px;color:#ececec">Geometry Nodes</div>
<svg style="left:1828px;top:467px" width="16" height="17"><path d="M8 1 L14.5 3 V9 C14.5 13 11 15 8 16 C5 15 1.5 13 1.5 9 V3 Z" fill="none" stroke="#a8a8a8" stroke-width="1.1"/></svg>
<svg style="left:1851px;top:467px" width="19" height="17"><path d="M3 5 V16 H12 M6 2 H13 L17 6 V13 H6 Z" fill="none" stroke="#dadada" stroke-width="1.3"/></svg>
<svg style="left:1880px;top:470px" width="12" height="12"><path d="M1 1L11 11M11 1L1 11" stroke="#e6e6e6" stroke-width="1.3"/></svg>
<svg style="left:1652px;top:500px" width="8" height="13"><path d="M1 1 L6.5 6.5 L1 12" fill="none" stroke="#d0d0d0" stroke-width="1.3"/></svg>
<div class="t" style="left:1669px;top:497px;color:#e6e6e6">Manage</div>

<!-- NODE EDITOR -->
<div class="a" style="left:1px;top:397px;width:1584px;height:565px;background-color:#1d1d1d;background-image:radial-gradient(circle, #2b2b2b 1px, transparent 1.3px),radial-gradient(circle, #222222 0.85px, transparent 1.05px);background-size:92px 92px,18.4px 18.4px;background-position:-18.3px -5.5px,0px -5.5px;border-radius:9px;overflow:hidden">
 <div class="a" style="left:0;top:0;width:1584px;height:34px;background:#1d1d1d"></div>
</div>
<div class="a" style="left:1px;top:397px;width:1584px;height:565px;border:1px solid #2c2c2c;border-radius:9px"></div>
<div class="a" style="left:1578px;top:430px;width:5px;height:518px;background:#2c2c2c;border-radius:3px"></div>
<div class="a" style="left:1573px;top:445px;width:12px;height:20px;background:#1a1a1a;border-radius:6px 0 0 6px"></div>
<svg style="left:1576px;top:447px" width="8" height="14"><path d="M6.5 1 L1.5 7 L6.5 13" fill="none" stroke="#8a8a8a" stroke-width="1.2"/></svg>
<div class="a" style="left:11px;top:956px;width:1563px;height:4.5px;background:#2c2c2c;border-radius:3px"></div>
<div class="a" style="left:1px;top:445px;width:8px;height:20px;background:#1a1a1a;border-radius:0 6px 6px 0"></div>
<svg style="left:2px;top:448px" width="8" height="14"><path d="M1.5 1 L6 7 L1.5 13" fill="none" stroke="#8a8a8a" stroke-width="1.2"/></svg>
<!-- ne header -->
<div class="btn" style="left:10px;top:400px;width:40px;height:25px;background:#202020;border-color:#333"></div>
<svg style="left:16px;top:404px" width="19" height="18"><circle cx="3.5" cy="3" r="2.3" fill="#a8a8a8"/><circle cx="8.5" cy="2.5" r="2" fill="#a8a8a8"/><circle cx="5" cy="8.5" r="2.6" fill="#e0e0e0"/><circle cx="13" cy="13" r="4.5" fill="#e0e0e0"/></svg>
<svg style="left:38px;top:410px" width="9" height="6"><path d="M0.5 0.8l3.8 3.8 3.8-3.8" fill="none" stroke="#ddd" stroke-width="1.3"/></svg>
<div class="btn" style="left:56px;top:400px;width:99px;height:25px;background:#202020;border-color:#333"></div>
<div class="t" style="left:66px;top:403px;color:#e6e6e6">Modifier</div>
<svg style="left:143px;top:411px" width="9" height="6"><path d="M0.5 0.8l3.8 3.8 3.8-3.8" fill="none" stroke="#ddd" stroke-width="1.3"/></svg>
<div class="t" style="left:170px;top:403px;color:#e6e6e6">View</div>
<div class="t" style="left:222px;top:403px;color:#e6e6e6">Select</div>
<div class="t" style="left:283px;top:403px;color:#e6e6e6">Add</div>
<div class="t" style="left:329px;top:403px;color:#e6e6e6">Node</div>
<div class="a" style="left:643px;top:400px;width:242px;height:25px;background:#2a2a2a;border-radius:6px;border:1px solid #333;overflow:hidden"><div class="a" style="left:38px;top:0;width:128px;height:25px;background:#1b1b1b;border-left:1px solid #333"></div><div class="a" style="left:166px;top:0;width:76px;height:25px;background:#545454"></div><div class="a" style="left:191px;top:0;width:1px;height:25px;background:#4a4a4a"></div><div class="a" style="left:216px;top:0;width:1px;height:25px;background:#4a4a4a"></div></div>
<svg style="left:648px;top:403px" width="20" height="20"><rect x="3" y="1" width="9.8" height="7.8" rx="2.6" fill="#e4e4e4"/><rect x="0.2" y="10.3" width="10" height="7.7" rx="2.6" fill="#e4e4e4"/><rect x="4.5" y="5.8" width="7" height="1.2" fill="#444"/><rect x="1.8" y="15" width="7" height="1.2" fill="#444"/><path d="M14 2.8 C16.3 3.2 16.3 5 16.3 8 V13 C16.3 15.5 15.5 16.2 12.5 16.2" fill="none" stroke="#b0b0b0" stroke-width="1.1"/><path d="M13.5 1.2 L15.5 3.2 L13.5 4.5 Z M10.8 15 L12.8 16.2 L10.8 17.6 Z" fill="#d0d0d0"/></svg>
<svg style="left:669px;top:410px" width="9" height="6"><path d="M0.5 0.8l3.8 3.8 3.8-3.8" fill="none" stroke="#ddd" stroke-width="1.3"/></svg>
<div class="t" style="left:691px;top:403px;color:#ececec">Geometry Nodes</div>
<svg style="left:815px;top:404px" width="16" height="17"><path d="M8 1 L14.5 3 V9 C14.5 13 11 15 8 16 C5 15 1.5 13 1.5 9 V3 Z" fill="none" stroke="#a8a8a8" stroke-width="1.1"/></svg>
<svg style="left:838px;top:404px" width="19" height="17"><path d="M3 5 V16 H12 M6 2 H13 L17 6 V13 H6 Z" fill="none" stroke="#dadada" stroke-width="1.3"/></svg>
<svg style="left:867px;top:407px" width="12" height="12"><path d="M1 1L11 11M11 1L1 11" stroke="#e6e6e6" stroke-width="1.3"/></svg>
<svg style="left:895px;top:404px" width="18" height="18"><path d="M1 17 L6.5 11.5 M4.5 8 L10 13.5 L10.5 10.5 L14.5 6.5 L16 7.5 L17 4 L13.5 1 L11 2 L12 3.5 L8 7.5 Z" fill="none" stroke="#9a9a9a" stroke-width="1.2"/></svg>
<div class="a" style="left:1497px;top:401px;width:23px;height:23px;background:#4772b3;border-radius:5px"></div>
<svg style="left:1498px;top:402px" width="21" height="21"><path d="M6.5 9.5 C4 5 8 1.5 12 2.5 C17 3.5 18 9 14.5 12.5 L11 16" fill="none" stroke="#f4f4f4" stroke-width="3.4"/><rect x="3.5" y="7" width="4" height="3.5" transform="rotate(-40 5.5 8.75)" fill="#f4f4f4"/><rect x="9" y="14" width="4" height="3.5" transform="rotate(-40 11 15.75)" fill="#f4f4f4"/><path d="M2 19 V16 H4.5 V13.5" fill="none" stroke="#a8c0ea" stroke-width="0.9"/></svg>
<div class="a" style="left:1528px;top:401px;width:49px;height:24px;background:#282828;border-radius:5px;overflow:hidden;border:1px solid #333"><div class="a" style="left:0;top:0;width:23px;height:24px;background:#4772b3"></div></div>
<svg style="left:1530px;top:403px" width="22" height="20"><circle cx="12" cy="8" r="5.5" fill="#f0f0f0"/><path d="M4.5 10 A6.5 6.5 0 0 0 15 15.5" fill="none" stroke="#f0f0f0" stroke-width="1.3"/></svg>
<svg style="left:1559px;top:410px" width="9" height="6"><path d="M0.5 0.8l3.8 3.8 3.8-3.8" fill="none" stroke="#ddd" stroke-width="1.3"/></svg>
<!-- breadcrumbs -->
<svg style="left:23px;top:446px" width="19" height="18"><path d="M1 5V1H5 M14 1H18V5 M18 13V17H14 M5 17H1V13" fill="none" stroke="#9a9a9a" stroke-width="1.3"/><rect x="4.5" y="4.5" width="10" height="9" fill="#e6e6e6"/></svg>
<div class="t" style="left:53px;top:445px;color:#e6e6e6">Stroke</div>
<svg style="left:115px;top:448px" width="8" height="13"><path d="M1 1 L6.5 6.5 L1 12" fill="none" stroke="#d0d0d0" stroke-width="1.3"/></svg>
<svg style="left:134px;top:446px" width="19" height="18"><circle cx="3.5" cy="3" r="2.3" fill="#a8a8a8"/><circle cx="8.5" cy="2.5" r="2" fill="#a8a8a8"/><circle cx="5" cy="8.5" r="2.6" fill="#e0e0e0"/><circle cx="13" cy="13" r="4.5" fill="#e0e0e0"/></svg>
<div class="t" style="left:165px;top:445px;color:#e6e6e6">GeometryNodes</div>
<svg style="left:292px;top:448px" width="8" height="13"><path d="M1 1 L6.5 6.5 L1 12" fill="none" stroke="#d0d0d0" stroke-width="1.3"/></svg>
<svg style="left:311px;top:445px" width="20" height="20"><rect x="3" y="1" width="9.8" height="7.8" rx="2.6" fill="#e4e4e4"/><rect x="0.2" y="10.3" width="10" height="7.7" rx="2.6" fill="#e4e4e4"/><rect x="4.5" y="5.8" width="7" height="1.2" fill="#444"/><rect x="1.8" y="15" width="7" height="1.2" fill="#444"/><path d="M14 2.8 C16.3 3.2 16.3 5 16.3 8 V13 C16.3 15.5 15.5 16.2 12.5 16.2" fill="none" stroke="#b0b0b0" stroke-width="1.1"/><path d="M13.5 1.2 L15.5 3.2 L13.5 4.5 Z M10.8 15 L12.8 16.2 L10.8 17.6 Z" fill="#d0d0d0"/></svg>
<div class="t" style="left:341px;top:445px;color:#e6e6e6">Geometry Nodes</div>
<svg style="left:0;top:0" width="1920" height="991" font-family="Liberation Sans"><defs><filter id="blur" x="-20%" y="-20%" width="140%" height="140%"><feGaussianBlur stdDeviation="3"/></filter></defs><path d="M267.6 543.1 C290.232 543.1 300.168 565.8 322.8 565.8" fill="none" stroke="#111" stroke-width="3.6" stroke-opacity="0.7"/><path d="M267.6 543.1 C290.232 543.1 300.168 565.8 322.8 565.8" fill="none" stroke="#aef2de" stroke-width="2.2"/><path d="M470 543.0 C590.13 543.0 642.87 673.5 763 673.5" fill="none" stroke="#111" stroke-width="3.6" stroke-opacity="0.7"/><path d="M470 543.0 C590.13 543.0 642.87 673.5 763 673.5" fill="none" stroke="#aef2de" stroke-width="2.2"/><path d="M433 690.4 C568.3 690.4 627.7 679.1 763 679.1" fill="none" stroke="#111" stroke-width="3.6" stroke-opacity="0.7"/><path d="M433 690.4 C568.3 690.4 627.7 679.1 763 679.1" fill="none" stroke="#00d6a3" stroke-width="2.2"/><path d="M598.8 745.4 C666.122 745.4 695.678 683.6 763 683.6" fill="none" stroke="#111" stroke-width="3.6" stroke-opacity="0.7"/><path d="M598.8 745.4 C666.122 745.4 695.678 683.6 763 683.6" fill="none" stroke="#00d6a3" stroke-width="2.2"/><path d="M893.5 653.4 C908.547 653.4 915.153 676.2 930.2 676.2" fill="none" stroke="#111" stroke-width="3.6" stroke-opacity="0.7"/><path d="M893.5 653.4 C908.547 653.4 915.153 676.2 930.2 676.2" fill="none" stroke="#00d6a3" stroke-width="2.2"/><path d="M1077 653.3 C1092.375 653.3 1099.125 676.2 1114.5 676.2" fill="none" stroke="#111" stroke-width="3.6" stroke-opacity="0.7"/><path d="M1077 653.3 C1092.375 653.3 1099.125 676.2 1114.5 676.2" fill="none" stroke="#00d6a3" stroke-width="2.2"/><path d="M1243 653.3 C1265.673 653.3 1275.627 653.6 1298.3 653.6" fill="none" stroke="#111" stroke-width="3.6" stroke-opacity="0.7"/><path d="M1243 653.3 C1265.673 653.3 1275.627 653.6 1298.3 653.6" fill="none" stroke="#00d6a3" stroke-width="2.2"/><rect x="140" y="514" width="130.5" height="67.29999999999995" rx="5" fill="#000" opacity="0.25" filter="url(#blur)"/><path d="M138 516 Q138 511 143 511 H263.5 Q268.5 511 268.5 516 V530.4 H138 Z" fill="#1c1c1c"/><path d="M138 530.4 H268.5 V573.3 Q268.5 578.3 263.5 578.3 H143 Q138 578.3 138 573.3 Z" fill="#212121"/><rect x="138" y="511" width="130.5" height="67.29999999999995" rx="5" fill="none" stroke="#e0640f" stroke-width="1.6"/><path d="M148.9 518.0 L153.4 522.5 L157.9 518.0" fill="none" stroke="#c8c8c8" stroke-width="1.1"/><text x="163.2" y="524" fill="#9e9e9e" stroke="#9e9e9e" stroke-width="0.15" font-size="10.7" text-anchor="start">Group Input</text><text x="255.8" y="546.8" fill="#a2a2a2" stroke="#a2a2a2" stroke-width="0.15" font-size="10.7" text-anchor="end">Geometry</text><circle cx="267.6" cy="543.1" r="4.0" fill="#00d6a3" stroke="#151515" stroke-width="0.5"/><circle cx="267.6" cy="563.6" r="4.2" fill="#333" stroke="#8a8a8a" stroke-width="0.9"/><rect x="324" y="514" width="149" height="110.70000000000005" rx="5" fill="#000" opacity="0.25" filter="url(#blur)"/><path d="M322 516 Q322 511 327 511 H466 Q471 511 471 516 V529.9 H322 Z" fill="#1b2f2a"/><path d="M322 529.9 H471 V616.7 Q471 621.7 466 621.7 H327 Q322 621.7 322 616.7 Z" fill="#212121"/><rect x="322" y="511" width="149" height="110.70000000000005" rx="5" fill="none" stroke="#e0640f" stroke-width="1.6"/><path d="M322.8 565.8 C380 565.8 420 543 470 543" fill="none" stroke="#1c5446" stroke-width="2"/><path d="M333.0 517.8 L337.5 522.3 L342.0 517.8" fill="none" stroke="#c8c8c8" stroke-width="1.1"/><text x="347.4" y="523.9" fill="#9c9c9c" stroke="#9c9c9c" stroke-width="0.15" font-size="10.7" text-anchor="start">Grease Pencil to Curves</text><text x="459.1" y="546.6" fill="#a0a0a0" stroke="#a0a0a0" stroke-width="0.15" font-size="10.7" text-anchor="end">Curves</text><text x="333.3" y="569.5" fill="#a0a0a0" stroke="#a0a0a0" stroke-width="0.15" font-size="10.7" text-anchor="start">Grease Pencil</text><text x="333.3" y="589.8" fill="#a0a0a0" stroke="#a0a0a0" stroke-width="0.15" font-size="10.7" text-anchor="start">Selection</text><rect x="332.6" y="600.7" width="13.899999999999977" height="13.399999999999977" rx="2.5" fill="#383838"/><text x="349.3" y="610.6" fill="#a0a0a0" stroke="#a0a0a0" stroke-width="0.15" font-size="10.7" text-anchor="start">Layers as Instances</text><circle cx="470" cy="543" r="4.0" fill="#00d6a3" stroke="#151515" stroke-width="0.5"/><circle cx="322.8" cy="565.8" r="4.0" fill="#00d6a3" stroke="#151515" stroke-width="0.5"/><path d="M322.8 581.6 L327.8 586.6 L322.8 591.6 L317.8 586.6 Z" fill="#c9a3e3" stroke="#151515" stroke-width="0.5"/><rect x="321.90000000000003" y="585.9" width="1.8" height="1.4" fill="#333"/><circle cx="322.8" cy="606.9" r="4.0" fill="#c9a3e3" stroke="#151515" stroke-width="0.5"/><rect x="306.8" y="661.9" width="128.3" height="111.80000000000007" rx="5" fill="#000" opacity="0.25" filter="url(#blur)"/><path d="M304.8 663.9 Q304.8 658.9 309.8 658.9 H428.1 Q433.1 658.9 433.1 663.9 V677.3 H304.8 Z" fill="#1f6e5b"/><path d="M304.8 677.3 H433.1 V765.7 Q433.1 770.7 428.1 770.7 H309.8 Q304.8 770.7 304.8 765.7 Z" fill="#303030"/><rect x="304.3" y="658.4" width="129.3" height="112.80000000000007" rx="5.5" fill="none" stroke="#141414" stroke-width="0.9"/><path d="M314.9 663.9 L319.4 668.4 L323.9 663.9" fill="none" stroke="#d8d8d8" stroke-width="1.1"/><text x="328.5" y="670.7" fill="#e8e8e8" stroke="#e8e8e8" stroke-width="0.15" font-size="10.7" text-anchor="start">Curve Circle</text><text x="421.2" y="693.6" fill="#e6e6e6" stroke="#e6e6e6" stroke-width="0.15" font-size="10.7" text-anchor="end">Curve</text><rect x="314" y="709" width="109" height="16" rx="4" fill="#545454"/><path d="M368.8 709 H419 Q423 709 423 713 V721 Q423 725 419 725 H368.8 Z" fill="#4772b3"/><text x="341.5" y="719.6" fill="#e6e6e6" stroke="#e6e6e6" stroke-width="0.15" font-size="10.7" text-anchor="middle">Points</text><text x="395.5" y="719.6" fill="#f0f0f0" stroke="#f0f0f0" stroke-width="0.15" font-size="10.7" text-anchor="middle">Radius</text><rect x="314" y="729.8" width="109" height="16.200000000000045" rx="4" fill="#545454"/><text x="327.5" y="740.5" fill="#e6e6e6" stroke="#e6e6e6" stroke-width="0.15" font-size="10.7" text-anchor="start">Resolution</text><text x="409.4" y="740.5" fill="#e6e6e6" stroke="#e6e6e6" stroke-width="0.15" font-size="10.7" text-anchor="end">32</text><rect x="314" y="749" width="109" height="17.100000000000023" rx="4" fill="#545454"/><text x="328.5" y="760.9" fill="#e6e6e6" stroke="#e6e6e6" stroke-width="0.15" font-size="10.7" text-anchor="start">Radius</text><text x="409.4" y="760.9" fill="#e6e6e6" stroke="#e6e6e6" stroke-width="0.15" font-size="10.7" text-anchor="end">1 m</text><circle cx="433" cy="690.4" r="4.0" fill="#00d6a3" stroke="#151515" stroke-width="0.5"/><circle cx="304.4" cy="737.3" r="4.0" fill="#5a9a5a" stroke="#151515" stroke-width="0.5"/><circle cx="304.4" cy="757.3" r="4.0" fill="#a1a1a1" stroke="#151515" stroke-width="0.5"/><rect x="472.2" y="716.9" width="128.59999999999997" height="225.5" rx="5" fill="#000" opacity="0.25" filter="url(#blur)"/><path d="M470.2 718.9 Q470.2 713.9 475.2 713.9 H593.8 Q598.8 713.9 598.8 718.9 V732.3 H470.2 Z" fill="#1f6e5b"/><path d="M470.2 732.3 H598.8 V934.4 Q598.8 939.4 593.8 939.4 H475.2 Q470.2 939.4 470.2 934.4 Z" fill="#303030"/><rect x="469.7" y="713.4" width="129.59999999999997" height="226.5" rx="5.5" fill="none" stroke="#141414" stroke-width="0.9"/><path d="M479.9 719.5 L484.4 724 L488.9 719.5" fill="none" stroke="#d8d8d8" stroke-width="1.1"/><text x="494.4" y="725.7" fill="#e8e8e8" stroke="#e8e8e8" stroke-width="0.15" font-size="10.7" text-anchor="start">Curve Line</text><text x="586.2" y="748.3" fill="#e6e6e6" stroke="#e6e6e6" stroke-width="0.15" font-size="10.7" text-anchor="end">Curve</text><rect x="480" y="762.7" width="108" height="16.399999999999977" rx="4" fill="#545454"/><path d="M533.2 762.7 H484 Q480 762.7 480 766.7 V775.1 Q480 779.1 484 779.1 H533.2 Z" fill="#4772b3"/><text x="506" y="773.5" fill="#f0f0f0" stroke="#f0f0f0" stroke-width="0.15" font-size="10.7" text-anchor="middle">Points</text><text x="560.5" y="773.5" fill="#e6e6e6" stroke="#e6e6e6" stroke-width="0.15" font-size="10.7" text-anchor="middle">Direction</text><text x="480.3" y="794.9" fill="#e6e6e6" stroke="#e6e6e6" stroke-width="0.15" font-size="10.7" text-anchor="start">Start</text><path d="M480 820.6 V806.8 Q480 802.8 484 802.8 H584 Q588 802.8 588 806.8 V820.6 Z" fill="#545454"/><text x="493.9" y="814.5999999999999" fill="#e6e6e6" stroke="#e6e6e6" stroke-width="0.15" font-size="10.7" text-anchor="start">X</text><text x="574.4" y="814.5999999999999" fill="#e6e6e6" stroke="#e6e6e6" stroke-width="0.15" font-size="10.7" text-anchor="end">0 m</text><rect x="480" y="820.6" width="108" height="17.899999999999977" fill="#545454"/><text x="493.9" y="832.4" fill="#e6e6e6" stroke="#e6e6e6" stroke-width="0.15" font-size="10.7" text-anchor="start">Y</text><text x="574.4" y="832.4" fill="#e6e6e6" stroke="#e6e6e6" stroke-width="0.15" font-size="10.7" text-anchor="end">0 m</text><path d="M480 838.5 H588 V852.5 Q588 856.5 584 856.5 H484 Q480 856.5 480 852.5 Z" fill="#545454"/><text x="493.9" y="850.3" fill="#e6e6e6" stroke="#e6e6e6" stroke-width="0.15" font-size="10.7" text-anchor="start">Z</text><text x="574.4" y="850.3" fill="#e6e6e6" stroke="#e6e6e6" stroke-width="0.15" font-size="10.7" text-anchor="end">0 m</text><path d="M480 897.5 V883.5 Q480 879.5 484 879.5 H584 Q588 879.5 588 883.5 V897.5 Z" fill="#545454"/><text x="493.9" y="891.3" fill="#e6e6e6" stroke="#e6e6e6" stroke-width="0.15" font-size="10.7" text-anchor="start">X</text><text x="574.4" y="891.3" fill="#e6e6e6" stroke="#e6e6e6" stroke-width="0.15" font-size="10.7" text-anchor="end">1 m</text><rect x="480" y="897.5" width="108" height="18.0" fill="#545454"/><text x="493.9" y="909.3" fill="#e6e6e6" stroke="#e6e6e6" stroke-width="0.15" font-size="10.7" text-anchor="start">Y</text><text x="574.4" y="909.3" fill="#e6e6e6" stroke="#e6e6e6" stroke-width="0.15" font-size="10.7" text-anchor="end">0 m</text><path d="M480 915.5 H588 V929.6 Q588 933.6 584 933.6 H484 Q480 933.6 480 929.6 Z" fill="#545454"/><text x="493.9" y="927.3" fill="#e6e6e6" stroke="#e6e6e6" stroke-width="0.15" font-size="10.7" text-anchor="start">Z</text><text x="574.4" y="927.3" fill="#e6e6e6" stroke="#e6e6e6" stroke-width="0.15" font-size="10.7" text-anchor="end">0 m</text><rect x="480" y="820.1" width="108" height="1" fill="#3c3c3c"/><rect x="480" y="838.0" width="108" height="1" fill="#3c3c3c"/><rect x="480" y="897.0" width="108" height="1" fill="#3c3c3c"/><rect x="480" y="915.0" width="108" height="1" fill="#3c3c3c"/><text x="480.3" y="870.9" fill="#e6e6e6" stroke="#e6e6e6" stroke-width="0.15" font-size="10.7" text-anchor="start">End</text><circle cx="598.8" cy="745.4" r="4.0" fill="#00d6a3" stroke="#151515" stroke-width="0.5"/><circle cx="469.8" cy="791" r="4.0" fill="#6363c7" stroke="#151515" stroke-width="0.5"/><circle cx="469.8" cy="867.7" r="4.0" fill="#6363c7" stroke="#151515" stroke-width="0.5"/><rect x="766.9" y="624.9" width="128.20000000000005" height="72.39999999999998" rx="5" fill="#000" opacity="0.25" filter="url(#blur)"/><path d="M764.9 626.9 Q764.9 621.9 769.9 621.9 H888.1 Q893.1 621.9 893.1 626.9 V640.3 H764.9 Z" fill="#1f6e5b"/><path d="M764.9 640.3 H893.1 V689.3 Q893.1 694.3 888.1 694.3 H769.9 Q764.9 694.3 764.9 689.3 Z" fill="#303030"/><rect x="764.4" y="621.4" width="129.20000000000005" height="73.39999999999998" rx="5.5" fill="none" stroke="#141414" stroke-width="0.9"/><path d="M775.2 628.2 L779.7 632.7 L784.2 628.2" fill="none" stroke="#d8d8d8" stroke-width="1.1"/><text x="788.3" y="634" fill="#e8e8e8" stroke="#e8e8e8" stroke-width="0.15" font-size="10.7" text-anchor="start">Join Geometry</text><text x="881.7" y="656.6" fill="#e6e6e6" stroke="#e6e6e6" stroke-width="0.15" font-size="10.7" text-anchor="end">Geometry</text><text x="774.2" y="681.7" fill="#e6e6e6" stroke="#e6e6e6" stroke-width="0.15" font-size="10.7" text-anchor="start">Geometry</text><circle cx="893.5" cy="653.4" r="4.0" fill="#00d6a3" stroke="#151515" stroke-width="0.5"/><rect x="760.9" y="668.2" width="7.4" height="20.5" rx="3.7" fill="#00d6a3" stroke="#111" stroke-width="0.6"/><rect x="932.2" y="624.8" width="146.79999999999995" height="108.20000000000005" rx="5" fill="#000" opacity="0.25" filter="url(#blur)"/><path d="M930.2 626.8 Q930.2 621.8 935.2 621.8 H1072 Q1077 621.8 1077 626.8 V640.2 H930.2 Z" fill="#1f6e5b"/><path d="M930.2 640.2 H1077 V725 Q1077 730 1072 730 H935.2 Q930.2 730 930.2 725 Z" fill="#303030"/><rect x="929.7" y="621.3" width="147.79999999999995" height="109.20000000000005" rx="5.5" fill="none" stroke="#141414" stroke-width="0.9"/><path d="M940.0 628.0 L944.5 632.5 L949.0 628.0" fill="none" stroke="#d8d8d8" stroke-width="1.1"/><text x="953.4" y="633.9" fill="#e8e8e8" stroke="#e8e8e8" stroke-width="0.15" font-size="10.7" text-anchor="start">Curves to Grease Pencil</text><text x="1065.3" y="656.6" fill="#e6e6e6" stroke="#e6e6e6" stroke-width="0.15" font-size="10.7" text-anchor="end">Grease Pencil</text><text x="940.3" y="679.5" fill="#e6e6e6" stroke="#e6e6e6" stroke-width="0.15" font-size="10.7" text-anchor="start">Curves</text><text x="940.3" y="699.8" fill="#e6e6e6" stroke="#e6e6e6" stroke-width="0.15" font-size="10.7" text-anchor="start">Selection</text><rect x="940" y="710" width="13" height="13" rx="2.5" fill="#545454"/><text x="956.1" y="719.5" fill="#e6e6e6" stroke="#e6e6e6" stroke-width="0.15" font-size="10.7" text-anchor="start">Instances as Layers</text><circle cx="1077" cy="653.3" r="4.0" fill="#00d6a3" stroke="#151515" stroke-width="0.5"/><circle cx="930.2" cy="676.2" r="4.0" fill="#00d6a3" stroke="#151515" stroke-width="0.5"/><path d="M930.2 691.3 L935.2 696.3 L930.2 701.3 L925.2 696.3 Z" fill="#c9a3e3" stroke="#151515" stroke-width="0.5"/><rect x="929.3000000000001" y="695.5999999999999" width="1.8" height="1.4" fill="#333"/><circle cx="930.2" cy="716" r="4.0" fill="#c9a3e3" stroke="#151515" stroke-width="0.5"/><rect x="1116.7" y="625" width="128.29999999999995" height="107.60000000000002" rx="5" fill="#000" opacity="0.25" filter="url(#blur)"/><path d="M1114.7 627 Q1114.7 622 1119.7 622 H1238 Q1243 622 1243 627 V640.2 H1114.7 Z" fill="#1f6e5b"/><path d="M1114.7 640.2 H1243 V724.6 Q1243 729.6 1238 729.6 H1119.7 Q1114.7 729.6 1114.7 724.6 Z" fill="#303030"/><rect x="1114.2" y="621.5" width="129.29999999999995" height="108.60000000000002" rx="5.5" fill="none" stroke="#141414" stroke-width="0.9"/><path d="M1125.0 628.0 L1129.5 632.5 L1134.0 628.0" fill="none" stroke="#d8d8d8" stroke-width="1.1"/><text x="1137.4" y="633.9" fill="#e8e8e8" stroke="#e8e8e8" stroke-width="0.15" font-size="10.7" text-anchor="start">Set Material</text><text x="1230.5" y="656.6" fill="#e6e6e6" stroke="#e6e6e6" stroke-width="0.15" font-size="10.7" text-anchor="end">Geometry</text><text x="1124.3" y="679.5" fill="#e6e6e6" stroke="#e6e6e6" stroke-width="0.15" font-size="10.7" text-anchor="start">Geometry</text><text x="1124.3" y="699.8" fill="#e6e6e6" stroke="#e6e6e6" stroke-width="0.15" font-size="10.7" text-anchor="start">Selection</text><rect x="1124.2" y="708" width="108" height="17.4" rx="4" fill="#1f1f1f" stroke="#3d3d3d" stroke-width="0.8"/><circle cx="1133.4" cy="716.6" r="6.3" fill="#eaeaea"/><path d="M1133.4 716.6 V710.3 A6.3 6.3 0 0 0 1127.1 716.6 Z M1133.4 716.6 H1139.7 A6.3 6.3 0 0 1 1133.4 722.9 Z" fill="#1f1f1f"/><text x="1147.2" y="719.5" fill="#e6e6e6" stroke="#e6e6e6" stroke-width="0.15" font-size="10.7" text-anchor="start">Solid Stroke</text><path d="M1216 712.5 L1224 720.5 M1224 712.5 L1216 720.5" stroke="#cfcfcf" stroke-width="1"/><circle cx="1243" cy="653.3" r="4.0" fill="#00d6a3" stroke="#151515" stroke-width="0.5"/><circle cx="1114.5" cy="676.2" r="4.0" fill="#00d6a3" stroke="#151515" stroke-width="0.5"/><path d="M1114.5 691.3 L1119.5 696.3 L1114.5 701.3 L1109.5 696.3 Z" fill="#c9a3e3" stroke="#151515" stroke-width="0.5"/><rect x="1113.6" y="695.5999999999999" width="1.8" height="1.4" fill="#333"/><circle cx="1114.5" cy="716" r="4.0" fill="#e66d7c" stroke="#151515" stroke-width="0.5"/><rect x="1300.6" y="624.6" width="128.4000000000001" height="65.10000000000002" rx="5" fill="#000" opacity="0.25" filter="url(#blur)"/><path d="M1298.6 626.6 Q1298.6 621.6 1303.6 621.6 H1422 Q1427 621.6 1427 626.6 V640.7 H1298.6 Z" fill="#1e1e1e"/><path d="M1298.6 640.7 H1427 V681.7 Q1427 686.7 1422 686.7 H1303.6 Q1298.6 686.7 1298.6 681.7 Z" fill="#303030"/><rect x="1298.1" y="621.1" width="129.4000000000001" height="66.10000000000002" rx="5.5" fill="none" stroke="#141414" stroke-width="0.9"/><path d="M1308.0 627.9 L1312.5 632.4 L1317.0 627.9" fill="none" stroke="#d8d8d8" stroke-width="1.1"/><text x="1321" y="633.8" fill="#e6e6e6" stroke="#e6e6e6" stroke-width="0.15" font-size="10.7" text-anchor="start">Group Output</text><text x="1308.2" y="656.5" fill="#e6e6e6" stroke="#e6e6e6" stroke-width="0.15" font-size="10.7" text-anchor="start">Geometry</text><circle cx="1298.3" cy="653.6" r="4.0" fill="#00d6a3" stroke="#151515" stroke-width="0.5"/><circle cx="1298.3" cy="673.4" r="4.2" fill="#303030" stroke="#8a8a8a" stroke-width="0.9"/></svg>

<!-- STATUS BAR -->
<div class="a" style="left:0;top:962px;width:1920px;height:29px;background:#171717"></div>
<svg style="left:12px;top:967px" width="22" height="21"><rect x="1" y="1.5" width="14" height="18" rx="4" fill="none" stroke="#9a9a9a" stroke-width="1.2"/><rect x="6.5" y="3.5" width="4" height="7" rx="1" fill="#9a9a9a"/><path d="M18 2 V9 M20.5 4 V8" stroke="#9a9a9a" stroke-width="1.1"/></svg>
<div class="t" style="left:36px;top:968px;color:#a8a8a8">Pan</div>
<svg style="left:72px;top:967px" width="18" height="21"><rect x="1" y="1.5" width="14" height="18" rx="4" fill="none" stroke="#9a9a9a" stroke-width="1.2"/><path d="M9 2 H11 C13.5 2 14.5 3.5 14.5 6 V9.5 H9 Z" fill="#9a9a9a"/></svg>
<div class="t" style="left:94px;top:968px;color:#a8a8a8">Options</div>
<div class="t" style="left:1870px;top:968px;color:#8a8a8a">4.4.0</div>
</body></html>
